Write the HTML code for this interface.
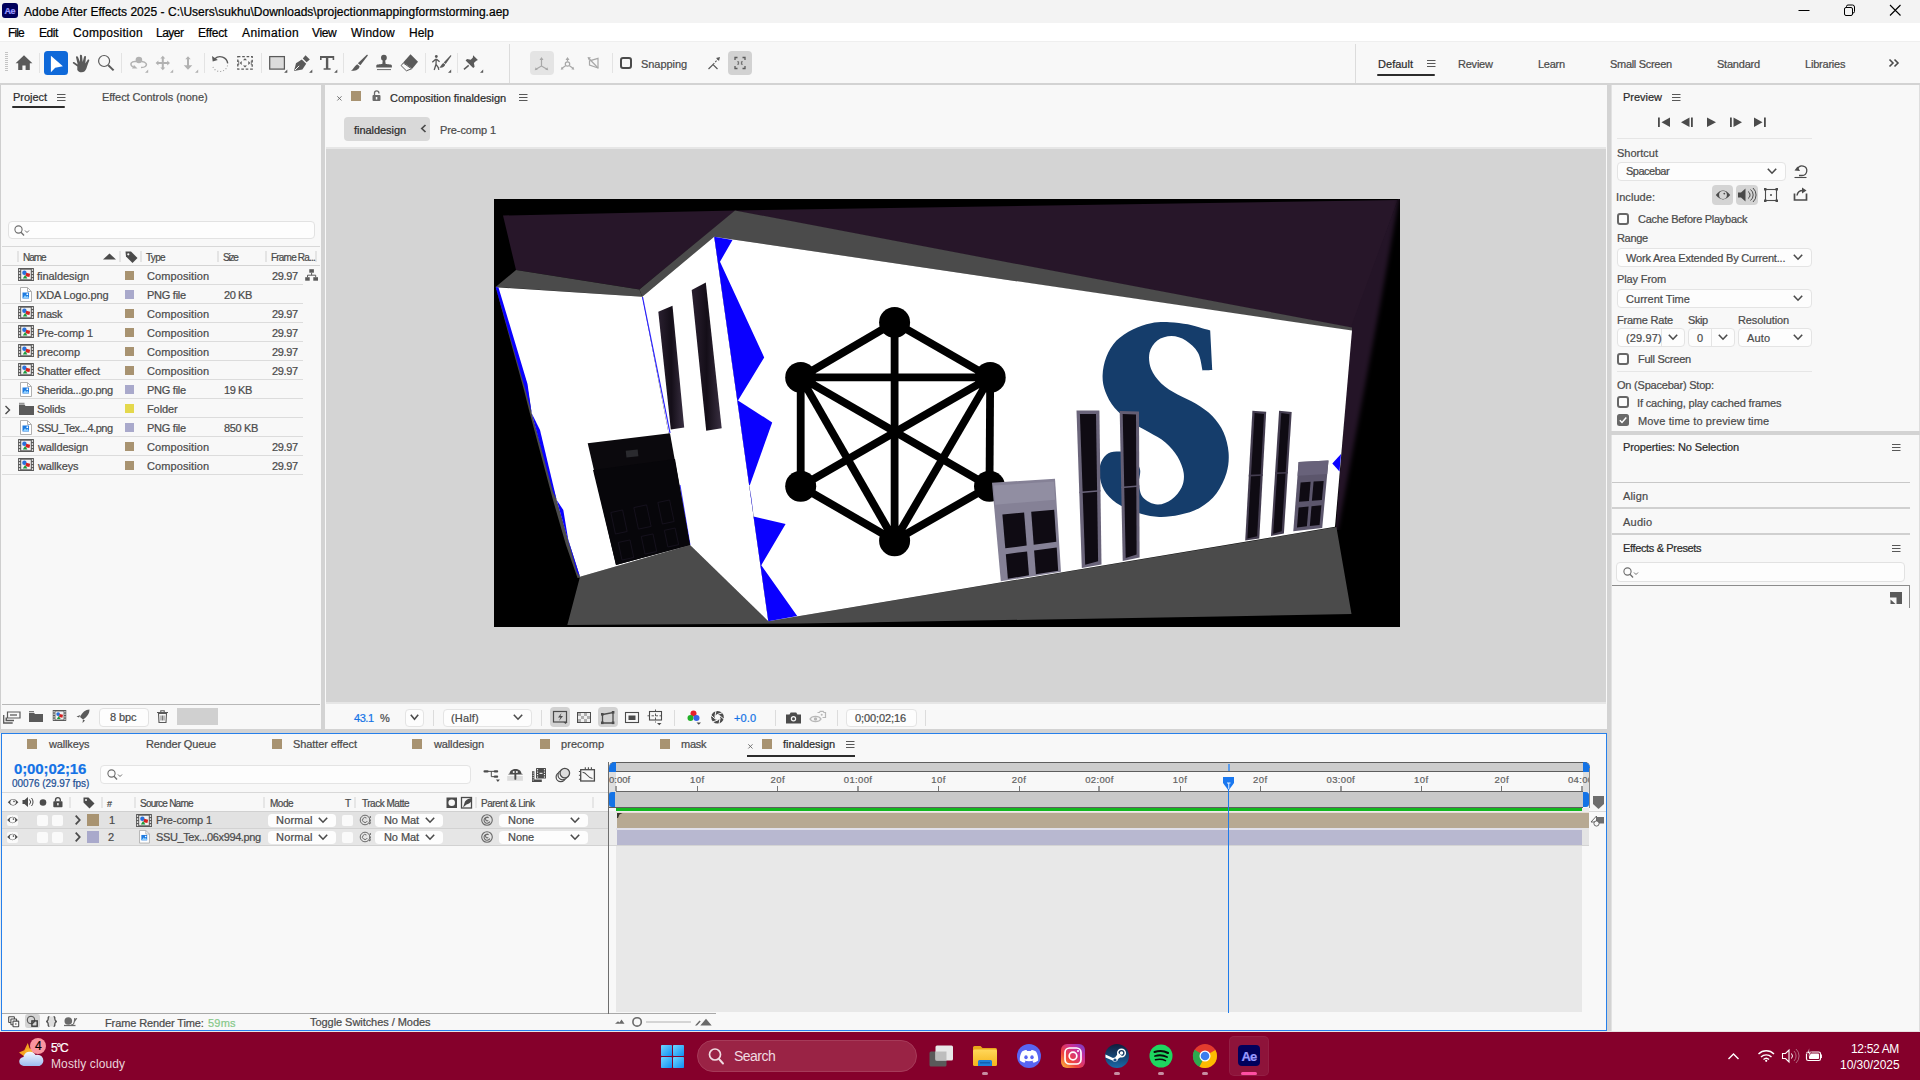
<!DOCTYPE html>
<html><head><meta charset="utf-8"><title>Adobe After Effects 2025</title>
<style>
html,body{margin:0;padding:0}
body{width:1920px;height:1080px;overflow:hidden;position:relative;background:#f8f8f8;font-family:"Liberation Sans",sans-serif;}
.a{position:absolute;display:block}
.t{position:absolute;white-space:pre;line-height:1;display:block;-webkit-text-stroke:0.22px currentColor}
svg{overflow:visible}
</style></head><body>

<!-- layout -->
<div class="a" style="left:0px;top:0px;width:1920px;height:23px;background:#f3f3f3;"></div>
<div class="a" style="left:0px;top:23px;width:1920px;height:18px;background:#ffffff;"></div>
<div class="a" style="left:0px;top:41px;width:1920px;height:42px;background:#f8f8f8;"></div>
<div class="a" style="left:0px;top:41px;width:1920px;height:1px;background:#efefef;"></div>
<div class="a" style="left:0px;top:83px;width:1920px;height:2px;background:#d3d3d3;"></div>
<div class="a" style="left:0px;top:85px;width:321px;height:644px;background:#f8f8f8;"></div>
<div class="a" style="left:0px;top:85px;width:1px;height:644px;background:#cfcfcf;"></div>
<div class="a" style="left:321px;top:85px;width:4px;height:644px;background:#d3d3d3;"></div>
<div class="a" style="left:325px;top:85px;width:1282px;height:644px;background:#f8f8f8;"></div>
<div class="a" style="left:326px;top:147px;width:1280px;height:2px;background:#e6e6e6;"></div>
<div class="a" style="left:326px;top:149px;width:1280px;height:553px;background:#d4d4d4;"></div>
<div class="a" style="left:326px;top:702px;width:1280px;height:2px;background:#e6e6e6;"></div>
<div class="a" style="left:1607px;top:85px;width:4px;height:948px;background:#d3d3d3;"></div>
<div class="a" style="left:1611px;top:85px;width:309px;height:947px;background:#f8f8f8;"></div>
<div class="a" style="left:1611px;top:85px;width:1px;height:947px;background:#e2e2e2;"></div>
<div class="a" style="left:1919px;top:85px;width:1px;height:947px;background:#dedede;"></div>
<div class="a" style="left:0px;top:729px;width:1611px;height:4px;background:#d3d3d3;"></div>
<div class="a" style="left:0px;top:733px;width:1px;height:298px;background:#ececec;"></div>
<div class="a" style="left:1px;top:733px;width:1606px;height:298px;background:#f8f8f8;box-sizing:border-box;border:1px solid #2680eb"></div>
<div class="a" style="left:0px;top:1031px;width:1920px;height:1px;background:#e9e3e3;"></div>
<div class="a" style="left:0px;top:1032px;width:1920px;height:48px;background:#85002b;"></div>
<!-- comp_art -->
<svg class="a" style="left:0;top:0" width="1920" height="1080" viewBox="0 0 1920 1080"><defs><clipPath id="cimg"><rect x="494" y="199" width="906" height="428"/></clipPath><linearGradient id="rw" x1="0" y1="0" x2="1" y2="0"><stop offset="0" stop-color="#21121f"/><stop offset="0.7" stop-color="#080408"/><stop offset="1" stop-color="#000"/></linearGradient><linearGradient id="wn" x1="0" y1="0" x2="1" y2="0"><stop offset="0" stop-color="#2a2030"/><stop offset="0.5" stop-color="#140e18"/><stop offset="1" stop-color="#3a3042"/></linearGradient><filter id="bl" x="-20%" y="-5%" width="140%" height="110%"><feGaussianBlur stdDeviation="2.2"/></filter></defs><g clip-path="url(#cimg)"><rect x="494" y="199" width="906" height="428" fill="#000"/><polygon points="503.0,215.5 735.0,210.5 1398.0,200.0 1352.0,328.0 735.0,211.0 639.4,289.4 516.0,270.0" fill="#271629" /><polygon points="1351.0,327.0 1398.0,199.0 1402.0,199.0 1402.0,530.0 1335.0,530.0 1336.0,526.0" fill="#241427" /><polygon points="1400.5,190 1412,190 1412,545 1334,545 1339.5,521 1381,300" fill="#000" filter="url(#bl)"/><polygon points="516.0,270.0 639.4,289.4 642.3,296.7 495.6,287.0" fill="#4b4b4b" /><polygon points="639.4,289.4 735.0,210.5 1352.0,327.5 1352.0,331.0 714.2,236.7 642.3,296.7" fill="#4b4b4b" /><polygon points="495.6,287.0 524.0,390.0 529.0,410.0 553.0,500.0 566.0,545.0 577.5,578.0 581.0,577.5 560.0,505.0 532.0,413.0 527.0,384.0" fill="#4b4b4b" /><polygon points="580.0,576.7 690.0,545.0 768.3,621.2 1336.4,527.0 1351.5,614.0 1220.0,616.5 800.0,623.5 567.3,625.0" fill="#4b4b4b" /><polygon points="496.0,287.3 642.3,296.7 690.0,545.0 580.0,576.7 568.3,540.0 556.7,500.0 531.7,413.3 526.7,383.3" fill="#fff" /><polygon points="642.3,296.7 714.2,236.7 768.3,621.2 690.0,545.0" fill="#fff" /><polygon points="714.2,236.7 1352.0,330.5 1335.0,526.8 768.3,621.2" fill="#fff" /><polygon points="495.6,287.0 498.5,287.5 527.5,384.0 531.7,413.3 526.0,392.0" fill="#0a00ff" /><polygon points="531.7,413.3 540.0,430.0 556.7,500.0 553.0,492.0" fill="#0a00ff" /><polygon points="556.7,500.0 563.3,510.0 568.3,540.0 580.0,576.7 577.0,572.0" fill="#0a00ff" /><line x1="642.5" y1="297" x2="670" y2="433" stroke="#2a20ff" stroke-width="1.2"/><line x1="680" y1="485" x2="690" y2="545" stroke="#3a30ff" stroke-width="1"/><polygon points="714.2,236.7 732.5,240.0 720.0,261.7 764.2,357.5 738.0,400.4 737.2,400.0" fill="#0a00ff" /><polygon points="737.2,400.0 738.0,400.4 772.2,422.4 749.8,485.3 749.1,485.0" fill="#0a00ff" /><polygon points="749.1,485.0 751.4,498.0 753.7,516.6 752.5,509.0" fill="#0a00ff" /><polygon points="753.5,516.6 785.6,524.0 761.3,565.2 797.2,616.0 768.3,621.2" fill="#0a00ff" /><polygon points="1332.3,463.6 1341.0,454.0 1339.5,471.4" fill="#0a00ff" /><polygon points="658.3,311.7 672.5,305.8 684.2,427.5 670.8,429.6" fill="url(#wn)" /><polygon points="691.7,290.0 705.8,282.5 721.7,428.3 706.2,430.8" fill="url(#wn)" /><polygon points="587.7,443.3 670.0,433.3 690.0,545.0 616.0,565.0" fill="#0b090d" /><polygon points="593.0,470.0 675.0,459.0 690.0,545.0 616.0,565.0" fill="#07060a" /><rect x="626" y="450" width="12" height="7" fill="#2a2a2e" transform="rotate(-6 632 453)"/><rect x="613" y="511" width="12" height="22" fill="none" stroke="#17121f" stroke-width="0.8" transform="rotate(-12 619.0 522.0)"/><rect x="636" y="506" width="13" height="22" fill="none" stroke="#17121f" stroke-width="0.8" transform="rotate(-12 642.5 517.0)"/><rect x="660" y="501" width="12" height="22" fill="none" stroke="#17121f" stroke-width="0.8" transform="rotate(-12 666.0 512.0)"/><rect x="620" y="541" width="12" height="18" fill="none" stroke="#17121f" stroke-width="0.8" transform="rotate(-12 626.0 550.0)"/><rect x="643" y="535" width="12" height="18" fill="none" stroke="#17121f" stroke-width="0.8" transform="rotate(-12 649.0 544.0)"/><rect x="666" y="529" width="11" height="17" fill="none" stroke="#17121f" stroke-width="0.8" transform="rotate(-12 671.5 537.5)"/><line x1="894.6" y1="322.4" x2="800.7" y2="377.4" stroke="#000" stroke-width="7.8"/><line x1="894.6" y1="322.4" x2="990.2" y2="377.4" stroke="#000" stroke-width="7.8"/><line x1="894.6" y1="322.4" x2="894.6" y2="540.7" stroke="#000" stroke-width="7.8"/><line x1="800.7" y1="377.4" x2="990.2" y2="377.4" stroke="#000" stroke-width="7.8"/><line x1="800.7" y1="377.4" x2="800.7" y2="486.3" stroke="#000" stroke-width="7.8"/><line x1="990.2" y1="377.4" x2="989.5" y2="486.3" stroke="#000" stroke-width="7.8"/><line x1="800.7" y1="377.4" x2="989.5" y2="486.3" stroke="#000" stroke-width="7.8"/><line x1="990.2" y1="377.4" x2="800.7" y2="486.3" stroke="#000" stroke-width="7.8"/><line x1="800.7" y1="377.4" x2="894.6" y2="540.7" stroke="#000" stroke-width="7.8"/><line x1="990.2" y1="377.4" x2="894.6" y2="540.7" stroke="#000" stroke-width="7.8"/><line x1="800.7" y1="486.3" x2="894.6" y2="540.7" stroke="#000" stroke-width="7.8"/><line x1="989.5" y1="486.3" x2="894.6" y2="540.7" stroke="#000" stroke-width="7.8"/><circle cx="894.6" cy="322.4" r="15.5" fill="#000"/><circle cx="800.7" cy="377.4" r="15.5" fill="#000"/><circle cx="990.2" cy="377.4" r="15.5" fill="#000"/><circle cx="800.7" cy="486.3" r="15.5" fill="#000"/><circle cx="989.5" cy="486.3" r="15.5" fill="#000"/><circle cx="894.6" cy="540.7" r="15.5" fill="#000"/><path d="M1210.2,330.4C1210.5,337.0 1212.0,363.5 1212.3,370.1C1210.7,370.2 1204.1,370.4 1202.5,370.5C1201.8,367.6 1200.8,357.8 1198.0,352.8C1195.2,347.8 1190.2,343.4 1185.8,340.6C1181.4,337.8 1176.2,336.1 1171.5,336.1C1166.8,336.1 1161.0,337.8 1157.3,340.6C1153.6,343.4 1150.5,348.1 1149.5,352.8C1148.5,357.6 1149.1,364.0 1151.1,369.1C1153.1,374.2 1156.9,379.1 1161.3,383.4C1165.7,387.6 1171.8,391.2 1177.6,394.6C1183.4,398.0 1190.2,400.1 1196.0,403.7C1201.8,407.3 1207.7,411.2 1212.3,416.0C1216.9,420.8 1220.8,426.2 1223.5,432.3C1226.2,438.4 1228.1,445.9 1228.6,452.7C1229.1,459.5 1228.5,466.2 1226.5,473.0C1224.5,479.8 1220.8,487.6 1216.4,493.4C1212.0,499.2 1206.1,504.1 1200.0,507.7C1193.9,511.3 1186.5,513.3 1179.7,514.8C1172.9,516.3 1165.8,517.1 1159.3,516.9C1152.8,516.7 1147.5,515.7 1141.0,513.8C1134.5,511.9 1126.4,509.0 1120.6,505.6C1114.8,502.2 1109.7,497.8 1106.3,493.4C1102.9,489.0 1101.2,483.9 1100.2,479.2C1099.2,474.4 1099.2,469.0 1100.2,464.9C1101.2,460.8 1103.6,456.9 1106.3,454.7C1109.0,452.5 1112.4,451.6 1116.5,451.6C1120.6,451.6 1126.9,451.8 1130.8,454.7C1134.7,457.6 1138.6,464.2 1139.9,469.0C1141.2,473.8 1138.4,478.4 1138.9,483.2C1139.4,487.9 1139.9,493.9 1143.0,497.5C1146.1,501.1 1152.5,504.3 1157.3,504.6C1162.0,504.9 1167.4,502.4 1171.5,499.5C1175.6,496.6 1179.7,491.7 1181.7,487.3C1183.7,482.9 1184.4,478.1 1183.7,473.0C1183.0,467.9 1180.6,461.8 1177.6,456.7C1174.5,451.6 1170.2,446.6 1165.4,442.5C1160.7,438.4 1154.9,435.7 1149.1,432.3C1143.3,428.9 1136.6,426.2 1130.8,422.1C1125.0,418.0 1118.8,412.9 1114.5,407.8C1110.2,402.7 1107.3,396.9 1105.3,391.5C1103.3,386.1 1102.4,381.0 1102.6,375.2C1102.8,369.4 1104.0,362.7 1106.3,356.9C1108.6,351.1 1112.1,345.2 1116.5,340.6C1120.9,336.0 1127.0,332.3 1132.8,329.4C1138.6,326.5 1145.0,324.4 1151.1,323.2C1157.2,322.0 1163.4,322.0 1169.5,322.2C1175.6,322.4 1182.4,323.3 1187.8,324.3C1193.2,325.3 1198.4,327.3 1202.1,328.3C1205.8,329.3 1208.8,330.0 1210.2,330.4Z" fill="#153d6b"/><polygon points="1076.5,410.6 1099.4,410.6 1101.5,564.6 1081.8,568.1" fill="#6a647a" /><polygon points="1079.9,414.0 1096.0,414.0 1098.1,561.2 1085.2,564.7" fill="#0f0b13" /><line x1="1079.3" y1="492.5" x2="1100.5" y2="490.7" stroke="#6a647a" stroke-width="1.6"/><polygon points="1119.7,410.9 1139.0,411.4 1139.6,557.6 1122.7,561.1" fill="#645e74" /><polygon points="1122.7,413.9 1136.0,414.4 1136.6,554.6 1125.7,558.1" fill="#0f0b13" /><line x1="1121.2" y1="487.5" x2="1139.3" y2="486.0" stroke="#645e74" stroke-width="1.6"/><polygon points="1252.4,410.7 1266.2,411.7 1259.3,538.4 1245.2,540.6" fill="#443d50" /><polygon points="1254.6,412.9 1264.0,413.9 1257.1,536.2 1247.4,538.4" fill="#0f0b13" /><line x1="1248.8" y1="475.6" x2="1262.8" y2="475.0" stroke="#443d50" stroke-width="1.6"/><polygon points="1279.1,410.7 1291.7,412.0 1283.9,533.4 1271.0,535.9" fill="#443d50" /><polygon points="1281.3,412.9 1289.5,414.2 1281.7,531.2 1273.2,533.7" fill="#0f0b13" /><line x1="1275.0" y1="473.3" x2="1287.8" y2="472.7" stroke="#443d50" stroke-width="1.6"/><polygon points="992.0,482.7 1055.0,478.7 1061.0,571.7 1000.8,581.3" fill="#858196" /><polygon points="993.5,485.6 1053.9,481.6 1055.1,499.7 995.2,504.8" fill="#918ea2" /><polygon points="1002.4,514.5 1024.1,512.5 1026.7,545.6 1005.3,548.3" fill="#0f0b13" /><polygon points="1005.8,554.2 1027.1,551.4 1029.0,575.3 1007.9,578.7" fill="#0f0b13" /><polygon points="1031.2,511.8 1054.2,509.7 1056.3,541.8 1033.7,544.7" fill="#0f0b13" /><polygon points="1034.1,550.4 1056.7,547.4 1058.2,570.7 1035.9,574.3" fill="#0f0b13" /><polygon points="1298.6,462.0 1328.5,460.4 1322.2,528.0 1293.3,531.2" fill="#5c566c" /><polygon points="1298.6,462.0 1328.5,460.4 1327.2,473.9 1297.5,475.8" fill="#68627a" /><polygon points="1300.6,482.5 1310.6,481.8 1309.0,501.0 1299.0,501.8" fill="#0f0b13" /><polygon points="1298.6,507.4 1308.6,506.5 1306.9,526.3 1297.0,527.4" fill="#0f0b13" /><polygon points="1313.6,481.6 1323.7,480.9 1321.9,499.9 1311.9,500.7" fill="#0f0b13" /><polygon points="1311.5,506.2 1321.4,505.3 1319.6,524.9 1309.8,526.0" fill="#0f0b13" /></g></svg>
<!-- topbars -->
<div class="a" style="left:2px;top:3px;width:16px;height:15px;background:#00005b;border-radius:3px"></div>
<span id="t0" class="t" style="left:4.50px;top:6.88px;font-size:9px;color:#9999ff;font-weight:700;letter-spacing:-0.500px;">Ae</span>
<span id="t1" class="t" style="left:24.00px;top:5.84px;font-size:12px;color:#000;font-weight:400;letter-spacing:0.028px;">Adobe After Effects 2025 - C:\Users\sukhu\Downloads\projectionmappingformstorming.aep</span>
<svg class="a" style="left:1790px;top:0px;" width="130" height="23" viewBox="0 0 130 23"><path d="M8.5,10.5H19.5" stroke="#000" stroke-width="1" fill="none"/><rect x="54.5" y="7.5" width="8" height="8" rx="1.5" fill="none" stroke="#000" stroke-width="1"/><path d="M56.5,7.5V6.5a1.5,1.5 0 0 1 1.5,-1.5H62.5a2,2 0 0 1 2,2V11.5a1.5,1.5 0 0 1 -1.5,1.5H62.5" fill="none" stroke="#000" stroke-width="1"/><path d="M100,5L110.5,15.5M110.5,5L100,15.5" stroke="#000" stroke-width="1.1" fill="none"/></svg>
<span id="t2" class="t" style="left:8.00px;top:26.84px;font-size:12px;color:#000;font-weight:400;letter-spacing:-0.887px;">File</span>
<span id="t3" class="t" style="left:39.00px;top:26.84px;font-size:12px;color:#000;font-weight:400;letter-spacing:-0.448px;">Edit</span>
<span id="t4" class="t" style="left:73.00px;top:26.84px;font-size:12px;color:#000;font-weight:400;letter-spacing:0.298px;">Composition</span>
<span id="t5" class="t" style="left:156.00px;top:26.84px;font-size:12px;color:#000;font-weight:400;letter-spacing:-0.505px;">Layer</span>
<span id="t6" class="t" style="left:198.00px;top:26.84px;font-size:12px;color:#000;font-weight:400;letter-spacing:-0.226px;">Effect</span>
<span id="t7" class="t" style="left:242.00px;top:26.84px;font-size:12px;color:#000;font-weight:400;letter-spacing:0.414px;">Animation</span>
<span id="t8" class="t" style="left:312.00px;top:26.84px;font-size:12px;color:#000;font-weight:400;letter-spacing:-0.376px;">View</span>
<span id="t9" class="t" style="left:351.00px;top:26.84px;font-size:12px;color:#000;font-weight:400;letter-spacing:0.197px;">Window</span>
<span id="t10" class="t" style="left:409.00px;top:26.84px;font-size:12px;color:#000;font-weight:400;letter-spacing:-0.002px;">Help</span>
<svg class="a" style="left:5px;top:52px;" width="3" height="22" viewBox="0 0 3 22"><rect x="0" y="0" width="3" height="1" fill="#c4c4c4"/><rect x="0" y="2" width="3" height="1" fill="#c4c4c4"/><rect x="0" y="4" width="3" height="1" fill="#c4c4c4"/><rect x="0" y="6" width="3" height="1" fill="#c4c4c4"/><rect x="0" y="8" width="3" height="1" fill="#c4c4c4"/><rect x="0" y="10" width="3" height="1" fill="#c4c4c4"/><rect x="0" y="12" width="3" height="1" fill="#c4c4c4"/><rect x="0" y="14" width="3" height="1" fill="#c4c4c4"/><rect x="0" y="16" width="3" height="1" fill="#c4c4c4"/><rect x="0" y="18" width="3" height="1" fill="#c4c4c4"/></svg>
<div class="a" style="left:39px;top:53px;width:1px;height:20px;background:#e3e3e3;"></div>
<div class="a" style="left:121px;top:53px;width:1px;height:20px;background:#e3e3e3;"></div>
<div class="a" style="left:204px;top:53px;width:1px;height:20px;background:#e3e3e3;"></div>
<div class="a" style="left:261px;top:53px;width:1px;height:20px;background:#e3e3e3;"></div>
<div class="a" style="left:343px;top:53px;width:1px;height:20px;background:#e3e3e3;"></div>
<div class="a" style="left:425px;top:53px;width:1px;height:20px;background:#e3e3e3;"></div>
<div class="a" style="left:457px;top:53px;width:1px;height:20px;background:#e3e3e3;"></div>
<div class="a" style="left:509px;top:44px;width:1px;height:39px;background:#dcdcdc;"></div>
<div class="a" style="left:612px;top:53px;width:1px;height:20px;background:#e3e3e3;"></div>
<div class="a" style="left:1355px;top:44px;width:1px;height:39px;background:#dcdcdc;"></div>
<div class="a" style="left:44px;top:51px;width:24px;height:24px;background:#0f69d9;border-radius:3.5px"></div>
<div class="a" style="left:530px;top:51px;width:24px;height:24px;background:#e4e4e4;border-radius:4px"></div>
<div class="a" style="left:728px;top:51px;width:24px;height:24px;background:#d2d2d2;border-radius:4px"></div>
<svg class="a" style="left:0;top:0" width="800" height="90" viewBox="0 0 800 90"><path d="M24,55.300L15.600,63.200H18.200V70H22.400V65.400H25.600V70H29.800V63.200H32.400Z" fill="#5a5a5a"/><path d="M50.900,55.700V72.200L55.200,67.800L62.900,66.300Z" fill="#fff"/><path d="M77.300,66.500L72.900,63.300c-.5,-.9 .6,-1.700 1.500,-1.100l3.300,2.200l-1.700,-7.100c-.2,-1.200 1.400,-1.600 1.900,-.5l2.100,5.300l-.1,-6.500c0,-1.200 1.900,-1.200 2.100,0l.7,6.300l1.400,-5.300c.4,-1.100 2,-.8 1.900,.4l-.7,6.400l2.300,-3.400c.7,-.9 2,-.2 1.600,.8c-1.200,2.900 -2,5.300 -2.700,7.400c-.8,2.300 -2.300,4.100 -5,4.100c-2,0 -3.200,-.9 -4.200,-2.300Z" fill="#5a5a5a"/><circle cx="104.100" cy="61" r="5.500" fill="none" stroke="#5a5a5a" stroke-width="1.200"/><path d="M108.300,65.300L113.600,70.400" stroke="#5a5a5a" stroke-width="2"/><circle cx="138.900" cy="60" r="3.300" fill="#b2b2b2"/><path d="M136,61.500c-4.500,-.5 -7,2.500 -3.200,5.500M141.800,61.500c4,.5 6,3 3.500,5c-1,.8 -2.500,1 -4.300,1" fill="none" stroke="#b2b2b2" stroke-width="1.400"/><path d="M132,68.500h5.500l-3.500,-3.500z" fill="#b2b2b2"/><path d="M148.2,69.6V72.8H145.0Z" fill="#b2b2b2"/><path d="M162.800,58v10M157.500,63h10.600" stroke="#b2b2b2" stroke-width="2"/><path d="M162.800,55.800l2.500,2.800h-5zM162.800,70.200l2.500,-2.800h-5zM155.600,63l2.800,-2.500v5zM170,63l-2.800,-2.500v5z" fill="#b2b2b2"/><path d="M173.2,69.6V72.8H170.0Z" fill="#b2b2b2"/><path d="M188,58.500v8" stroke="#b2b2b2" stroke-width="2"/><path d="M188,56.200l2.700,3h-5.400zM188,69.800l4.300,-4.600h-8.600z" fill="#b2b2b2"/><path d="M198.2,69.6V72.8H195.0Z" fill="#b2b2b2"/><path d="M214.800,58.800a7.700,7.700 0 0 1 12.900,4.600" fill="none" stroke="#5a5a5a" stroke-width="1.400"/><path d="M212,56l5.800,4l-5.100,1.500z" fill="#5a5a5a"/><path d="M227.500,65.500a7.700,7.700 0 0 1 -14.500,1.500" fill="none" stroke="#9a9a9a" stroke-width="1.100" stroke-dasharray="1 2"/><rect x="237.800" y="56.600" width="14.400" height="12.500" fill="none" stroke="#5a5a5a" stroke-width="1.300" stroke-dasharray="2.600 1.800"/><path d="M245,58.200l2,2h-4zM245,67.600l2,-2h-4zM239.700,62.900l2,-2v4zM250.300,62.900l-2,-2v4z" fill="#5a5a5a"/><path d="M238.700,60.700v4.400M251.300,60.700v4.400" stroke="#5a5a5a" stroke-width="0.800"/><rect x="269.700" y="56.600" width="14.700" height="12.500" fill="#dcdcdc" stroke="#5a5a5a" stroke-width="1.250"/><path d="M287.3,69.6V72.8H284.1Z" fill="#5a5a5a"/><path d="M294,71l2,-7.800l5.800,-3.800l4.400,4.400l-3.800,5.800z" fill="#5a5a5a"/><path d="M302.800,58.400l2.700,-3.200l4.300,4.300l-3.200,2.700z" fill="#5a5a5a"/><path d="M294.800,70.200l4.400,-4.400" stroke="#f8f8f8" stroke-width="1"/><path d="M312.3,69.6V72.8H309.1Z" fill="#5a5a5a"/><path d="M320,56h14.200v4h-1.600v-2h-4.300v10.300h2.300v1.400h-7v-1.400h2.300v-10.300h-4.300v2h-1.600z" fill="#5a5a5a"/><path d="M337.3,69.6V72.8H334.1Z" fill="#5a5a5a"/><path d="M366.800,54.800c.7,-.3 1.200,.2 .9,.9l-7.300,9.600l-2.500,-2z" fill="#5a5a5a"/><path d="M357.200,64.200l2.400,2c-.4,3 -3.600,5 -8.600,4.600c2.400,-1.400 3,-4.400 6.200,-6.600z" fill="#5a5a5a"/><circle cx="383.900" cy="57.700" r="2.900" fill="#5a5a5a"/><path d="M382.800,59.500h2.200l.7,4.600c2.500,.2 6.200,.3 6.200,1.700v1.800h-15.600v-1.800c0,-1.400 3.500,-1.500 6,-1.700z" fill="#5a5a5a"/><path d="M377,69.600h14" stroke="#5a5a5a" stroke-width="0.900"/><path d="M410.500,54.200l7.500,7.500l-5.800,7l-9,-6.200z" fill="#5a5a5a"/><path d="M403.300,63l8.300,5.800l-5.200,2.000l-5.300,-5.200z" fill="#f8f8f8" stroke="#5a5a5a" stroke-width="1"/><circle cx="436.300" cy="56.500" r="1.400" fill="#5a5a5a"/><path d="M432.300,62.200l3.200,-2.700l1.300,0l2.800,2.300M436.200,59.500l-.2,4.800l-1.800,5.700M436,64.300l2.300,3.200l.5,2.300" stroke="#5a5a5a" stroke-width="1.300" fill="none"/><path d="M450.500,55.300c.6,-.3 1,.1 .8,.7l-5.600,8l-2,-1.500z" fill="#5a5a5a"/><path d="M443.200,63l2,1.600c-.3,2.200 -2.800,3.500 -6,3c1.600,-1 2,-3 4,-4.600z" fill="#5a5a5a"/><path d="M451.2,69.6V72.8H448.0Z" fill="#5a5a5a"/><path d="M473.100,55.200l4.800,4.800l-1.900,.9l-2.100,2.100l.7,3.700l-1.400,1.400l-7.600,-7.600l1.400,-1.400l3.700,.7l2.100,-2.100z" fill="#5a5a5a"/><path d="M468.700,65.400l-4.700,3.900" stroke="#5a5a5a" stroke-width="1.500"/><path d="M483.2,69.6V72.8H480.0Z" fill="#5a5a5a"/><path d="M541.500,58.500v7.500l-5.500,3.300M541.500,66l5.500,3.300" stroke="#a8a8a8" stroke-width="1.200" fill="none"/><path d="M541.500,57l2,3h-4zM534.700,70.200l1,-3l2,2.500zM548.300,70.200l-1,-3l-2,2.500z" fill="#a8a8a8"/><path d="M567.500,58.500v3M565.600,65.700l-3.600,2.500M569.400,65.700l3.600,2.500" stroke="#a8a8a8" stroke-width="1.200" fill="none"/><circle cx="567.500" cy="64" r="2.200" fill="none" stroke="#a8a8a8" stroke-width="1.200"/><path d="M567.500,57l2,3h-4zM560.700,69.700l1,-3l2,2.500zM574.300,69.700l-1,-3l-2,2.500z" fill="#a8a8a8"/><path d="M589.500,60.800l8.500,-2.500v9.700l-8.500,-3z" stroke="#a8a8a8" stroke-width="1.200" fill="none"/><path d="M588.500,58l9.500,10" stroke="#a8a8a8" stroke-width="1.200"/><path d="M587.500,57l3.500,.5l-2.500,2.500z" fill="#a8a8a8"/><path d="M708.500,69l4.500,-4.500l4.500,4.500" fill="none" stroke="#5a5a5a" stroke-width="1.200"/><path d="M713,64.500l5,-5.500" stroke="#5a5a5a" stroke-width="1.100" stroke-dasharray="2 1.300"/><path d="M720,57l-1,4l-3,-3z" fill="#5a5a5a"/><path d="M735,60v-2.500h2.500M745,60v-2.500h-2.500M735,66v2.500h2.500M745,66v2.500h-2.500" stroke="#5a5a5a" stroke-width="1.300" fill="none"/><path d="M737.500,61.500l1.500,1M742.500,61.500l-1.500,1M737.500,64.500l1.500,-1M742.500,64.500l-1.500,-1" stroke="#5a5a5a" stroke-width="1.300"/></svg>
<div class="a" style="left:620px;top:57px;width:12px;height:12px;background:transparent;box-sizing:border-box;border:2px solid #4b4b4b;border-radius:3px"></div>
<span id="t11" class="t" style="left:641.00px;top:59.19px;font-size:11px;color:#4b4b4b;font-weight:400;letter-spacing:-0.053px;">Snapping</span>
<span id="t12" class="t" style="left:1378.00px;top:58.99px;font-size:11px;color:#2c2c2c;font-weight:400;letter-spacing:0.034px;">Default</span>
<div class="a" style="left:1377px;top:74px;width:58px;height:2px;background:#2c2c2c;border-radius:1px"></div>
<svg class="a" style="left:1427px;top:59.5px;" width="9" height="8" viewBox="0 0 9 8"><path d="M0,0.5H8.5M0,3.5H8.5M0,6.5H8.5" stroke="#585858" stroke-width="1" fill="none"/></svg>
<span id="t13" class="t" style="left:1458.00px;top:58.99px;font-size:11px;color:#4b4b4b;font-weight:400;letter-spacing:-0.225px;">Review</span>
<span id="t14" class="t" style="left:1538.00px;top:58.99px;font-size:11px;color:#4b4b4b;font-weight:400;letter-spacing:-0.254px;">Learn</span>
<span id="t15" class="t" style="left:1610.00px;top:58.99px;font-size:11px;color:#4b4b4b;font-weight:400;letter-spacing:-0.300px;">Small Screen</span>
<span id="t16" class="t" style="left:1717.00px;top:58.99px;font-size:11px;color:#4b4b4b;font-weight:400;letter-spacing:-0.218px;">Standard</span>
<span id="t17" class="t" style="left:1805.00px;top:58.99px;font-size:11px;color:#4b4b4b;font-weight:400;letter-spacing:-0.211px;">Libraries</span>
<svg class="a" style="left:1888px;top:58px;" width="12" height="10" viewBox="0 0 12 10"><path d="M1.5,1.5L5,5L1.5,8.5M6.5,1.5L10,5L6.5,8.5" fill="none" stroke="#4b4b4b" stroke-width="1.6"/></svg>
<!-- project -->
<span id="t18" class="t" style="left:13.00px;top:92.19px;font-size:11px;color:#2c2c2c;font-weight:400;letter-spacing:-0.030px;">Project</span>
<svg class="a" style="left:57px;top:93.5px;" width="9" height="8" viewBox="0 0 9 8"><path d="M0,0.5H8.5M0,3.5H8.5M0,6.5H8.5" stroke="#585858" stroke-width="1" fill="none"/></svg>
<div class="a" style="left:12px;top:106px;width:53px;height:2px;background:#2c2c2c;border-radius:1px"></div>
<span id="t19" class="t" style="left:102.00px;top:92.19px;font-size:11px;color:#4b4b4b;font-weight:400;letter-spacing:-0.054px;">Effect Controls (none)</span>
<div class="a" style="left:7.5px;top:221px;width:307.5px;height:18px;background:#fdfdfd;box-sizing:border-box;border:1px solid #e2e2e2;border-radius:4px"></div>
<svg class="a" style="left:14px;top:225px;" width="18" height="12" viewBox="0 0 18 12"><circle cx="4.500" cy="4.500" r="3.600" fill="none" stroke="#6e6e6e" stroke-width="1.100"/><path d="M7,7.300L10,10.500" stroke="#6e6e6e" stroke-width="1.300"/><path d="M11,5.500l2,2l2,-2" fill="none" stroke="#6e6e6e" stroke-width="1"/></svg>
<div class="a" style="left:2px;top:246px;width:318px;height:1px;background:#d8d8d8;"></div>
<div class="a" style="left:2px;top:265px;width:318px;height:1px;background:#d4d4d4;"></div>
<div class="a" style="left:17px;top:251px;width:2px;height:11px;background:#e4e4e4;"></div>
<div class="a" style="left:119px;top:251px;width:2px;height:11px;background:#e4e4e4;"></div>
<div class="a" style="left:140px;top:251px;width:2px;height:11px;background:#e4e4e4;"></div>
<div class="a" style="left:217px;top:251px;width:2px;height:11px;background:#e4e4e4;"></div>
<div class="a" style="left:265px;top:251px;width:2px;height:11px;background:#e4e4e4;"></div>
<div class="a" style="left:315px;top:251px;width:2px;height:11px;background:#e4e4e4;"></div>
<span id="t20" class="t" style="left:23.00px;top:253.03px;font-size:10px;color:#4b4b4b;font-weight:400;letter-spacing:-1.038px;">Name</span>
<svg class="a" style="left:103px;top:253px;" width="13" height="7" viewBox="0 0 13 7"><path d="M0,6.500L6.500,0.500L13,6.500Z" fill="#4b4b4b"/></svg>
<svg class="a" style="left:125px;top:251px;" width="13" height="13" viewBox="0 0 13 13"><path d="M0.500,0.500h5.500l6.500,6.500l-5,5l-6.500,-6.500z" fill="#4b4b4b"/><circle cx="3.300" cy="3.300" r="1.100" fill="#f8f8f8"/></svg>
<span id="t21" class="t" style="left:146.00px;top:253.03px;font-size:10px;color:#4b4b4b;font-weight:400;letter-spacing:-0.706px;">Type</span>
<span id="t22" class="t" style="left:223.00px;top:253.03px;font-size:10px;color:#4b4b4b;font-weight:400;letter-spacing:-1.200px;">Size</span>
<span id="t23" class="t" style="left:271.00px;top:253.03px;font-size:10px;color:#4b4b4b;font-weight:400;letter-spacing:-0.801px;">Frame Ra...</span>
<div class="a" style="left:2px;top:284px;width:301px;height:1px;background:#dcdcdc;"></div>
<svg class="a" style="left:18px;top:268.3px;" width="16" height="13" viewBox="0 0 16 13"><rect x="0" y="0" width="16" height="13" rx="0.500" fill="#5a5a5a"/><rect x="3.200" y="1.700" width="9.600" height="9.600" fill="#f2f2f2"/><rect x="0.900" y="1.2" width="1.300" height="1.700" fill="#ececec"/><rect x="13.800" y="1.2" width="1.300" height="1.700" fill="#ececec"/><rect x="0.900" y="4.2" width="1.300" height="1.700" fill="#ececec"/><rect x="13.800" y="4.2" width="1.300" height="1.700" fill="#ececec"/><rect x="0.900" y="7.2" width="1.300" height="1.700" fill="#ececec"/><rect x="13.800" y="7.2" width="1.300" height="1.700" fill="#ececec"/><rect x="0.900" y="10.2" width="1.300" height="1.700" fill="#ececec"/><rect x="13.800" y="10.2" width="1.300" height="1.700" fill="#ececec"/><circle cx="6.400" cy="4.800" r="2.200" fill="#2a6fdb"/><rect x="7.800" y="5.200" width="4" height="3.500" fill="#d62020" transform="rotate(12 9.800 7)"/><path d="M4.800,10.600l2.300,-3.600l2.300,3.600z" fill="#1c9a3c"/></svg>
<span id="t24" class="t" style="left:37.00px;top:270.69px;font-size:11px;color:#4b4b4b;font-weight:400;letter-spacing:-0.048px;">finaldesign</span>
<div class="a" style="left:125px;top:271px;width:9px;height:9px;background:#a89371;"></div>
<span id="t25" class="t" style="left:147.00px;top:270.69px;font-size:11px;color:#4b4b4b;font-weight:400;letter-spacing:0.098px;">Composition</span>
<span id="t26" class="t" style="left:272.00px;top:270.69px;font-size:11px;color:#4b4b4b;font-weight:400;letter-spacing:-0.352px;">29.97</span>
<div class="a" style="left:2px;top:303px;width:301px;height:1px;background:#dcdcdc;"></div>
<svg class="a" style="left:20px;top:287px;" width="12" height="15" viewBox="0 0 12 15"><path d="M0.500,0.500H7.500L11.500,4.500V14.500H0.500Z" fill="#fff" stroke="#b0b0b0" stroke-width="1"/><path d="M7.500,0.500V4.500H11.500" fill="none" stroke="#b0b0b0" stroke-width="1"/><rect x="2.500" y="5.500" width="6.500" height="6" fill="#1e7be0"/><path d="M3,11l2,-2.800l1.500,1.500l1,-1l1.500,2.300z" fill="#8fd0ff"/><circle cx="7.300" cy="7.200" r="0.900" fill="#fff"/></svg>
<span id="t27" class="t" style="left:36.00px;top:289.69px;font-size:11px;color:#4b4b4b;font-weight:400;letter-spacing:-0.124px;">IXDA Logo.png</span>
<div class="a" style="left:125px;top:290px;width:9px;height:9px;background:#a9a9cb;"></div>
<span id="t28" class="t" style="left:147.00px;top:289.69px;font-size:11px;color:#4b4b4b;font-weight:400;letter-spacing:-0.262px;">PNG file</span>
<span id="t29" class="t" style="left:224.00px;top:289.69px;font-size:11px;color:#4b4b4b;font-weight:400;letter-spacing:-0.407px;">20 KB</span>
<div class="a" style="left:2px;top:322px;width:301px;height:1px;background:#dcdcdc;"></div>
<svg class="a" style="left:18px;top:306.3px;" width="16" height="13" viewBox="0 0 16 13"><rect x="0" y="0" width="16" height="13" rx="0.500" fill="#5a5a5a"/><rect x="3.200" y="1.700" width="9.600" height="9.600" fill="#f2f2f2"/><rect x="0.900" y="1.2" width="1.300" height="1.700" fill="#ececec"/><rect x="13.800" y="1.2" width="1.300" height="1.700" fill="#ececec"/><rect x="0.900" y="4.2" width="1.300" height="1.700" fill="#ececec"/><rect x="13.800" y="4.2" width="1.300" height="1.700" fill="#ececec"/><rect x="0.900" y="7.2" width="1.300" height="1.700" fill="#ececec"/><rect x="13.800" y="7.2" width="1.300" height="1.700" fill="#ececec"/><rect x="0.900" y="10.2" width="1.300" height="1.700" fill="#ececec"/><rect x="13.800" y="10.2" width="1.300" height="1.700" fill="#ececec"/><circle cx="6.400" cy="4.800" r="2.200" fill="#2a6fdb"/><rect x="7.800" y="5.200" width="4" height="3.500" fill="#d62020" transform="rotate(12 9.800 7)"/><path d="M4.800,10.600l2.300,-3.600l2.300,3.600z" fill="#1c9a3c"/></svg>
<span id="t30" class="t" style="left:37.00px;top:308.69px;font-size:11px;color:#4b4b4b;font-weight:400;letter-spacing:-0.260px;">mask</span>
<div class="a" style="left:125px;top:309px;width:9px;height:9px;background:#a89371;"></div>
<span id="t31" class="t" style="left:147.00px;top:308.69px;font-size:11px;color:#4b4b4b;font-weight:400;letter-spacing:0.098px;">Composition</span>
<span id="t32" class="t" style="left:272.00px;top:308.69px;font-size:11px;color:#4b4b4b;font-weight:400;letter-spacing:-0.352px;">29.97</span>
<div class="a" style="left:2px;top:341px;width:301px;height:1px;background:#dcdcdc;"></div>
<svg class="a" style="left:18px;top:325.3px;" width="16" height="13" viewBox="0 0 16 13"><rect x="0" y="0" width="16" height="13" rx="0.500" fill="#5a5a5a"/><rect x="3.200" y="1.700" width="9.600" height="9.600" fill="#f2f2f2"/><rect x="0.900" y="1.2" width="1.300" height="1.700" fill="#ececec"/><rect x="13.800" y="1.2" width="1.300" height="1.700" fill="#ececec"/><rect x="0.900" y="4.2" width="1.300" height="1.700" fill="#ececec"/><rect x="13.800" y="4.2" width="1.300" height="1.700" fill="#ececec"/><rect x="0.900" y="7.2" width="1.300" height="1.700" fill="#ececec"/><rect x="13.800" y="7.2" width="1.300" height="1.700" fill="#ececec"/><rect x="0.900" y="10.2" width="1.300" height="1.700" fill="#ececec"/><rect x="13.800" y="10.2" width="1.300" height="1.700" fill="#ececec"/><circle cx="6.400" cy="4.800" r="2.200" fill="#2a6fdb"/><rect x="7.800" y="5.200" width="4" height="3.500" fill="#d62020" transform="rotate(12 9.800 7)"/><path d="M4.800,10.600l2.300,-3.600l2.300,3.600z" fill="#1c9a3c"/></svg>
<span id="t33" class="t" style="left:37.00px;top:327.69px;font-size:11px;color:#4b4b4b;font-weight:400;letter-spacing:-0.082px;">Pre-comp 1</span>
<div class="a" style="left:125px;top:328px;width:9px;height:9px;background:#a89371;"></div>
<span id="t34" class="t" style="left:147.00px;top:327.69px;font-size:11px;color:#4b4b4b;font-weight:400;letter-spacing:0.098px;">Composition</span>
<span id="t35" class="t" style="left:272.00px;top:327.69px;font-size:11px;color:#4b4b4b;font-weight:400;letter-spacing:-0.352px;">29.97</span>
<div class="a" style="left:2px;top:360px;width:301px;height:1px;background:#dcdcdc;"></div>
<svg class="a" style="left:18px;top:344.3px;" width="16" height="13" viewBox="0 0 16 13"><rect x="0" y="0" width="16" height="13" rx="0.500" fill="#5a5a5a"/><rect x="3.200" y="1.700" width="9.600" height="9.600" fill="#f2f2f2"/><rect x="0.900" y="1.2" width="1.300" height="1.700" fill="#ececec"/><rect x="13.800" y="1.2" width="1.300" height="1.700" fill="#ececec"/><rect x="0.900" y="4.2" width="1.300" height="1.700" fill="#ececec"/><rect x="13.800" y="4.2" width="1.300" height="1.700" fill="#ececec"/><rect x="0.900" y="7.2" width="1.300" height="1.700" fill="#ececec"/><rect x="13.800" y="7.2" width="1.300" height="1.700" fill="#ececec"/><rect x="0.900" y="10.2" width="1.300" height="1.700" fill="#ececec"/><rect x="13.800" y="10.2" width="1.300" height="1.700" fill="#ececec"/><circle cx="6.400" cy="4.800" r="2.200" fill="#2a6fdb"/><rect x="7.800" y="5.200" width="4" height="3.500" fill="#d62020" transform="rotate(12 9.800 7)"/><path d="M4.800,10.600l2.300,-3.600l2.300,3.600z" fill="#1c9a3c"/></svg>
<span id="t36" class="t" style="left:37.00px;top:346.69px;font-size:11px;color:#4b4b4b;font-weight:400;letter-spacing:0.053px;">precomp</span>
<div class="a" style="left:125px;top:347px;width:9px;height:9px;background:#a89371;"></div>
<span id="t37" class="t" style="left:147.00px;top:346.69px;font-size:11px;color:#4b4b4b;font-weight:400;letter-spacing:0.098px;">Composition</span>
<span id="t38" class="t" style="left:272.00px;top:346.69px;font-size:11px;color:#4b4b4b;font-weight:400;letter-spacing:-0.352px;">29.97</span>
<div class="a" style="left:2px;top:379px;width:301px;height:1px;background:#dcdcdc;"></div>
<svg class="a" style="left:18px;top:363.3px;" width="16" height="13" viewBox="0 0 16 13"><rect x="0" y="0" width="16" height="13" rx="0.500" fill="#5a5a5a"/><rect x="3.200" y="1.700" width="9.600" height="9.600" fill="#f2f2f2"/><rect x="0.900" y="1.2" width="1.300" height="1.700" fill="#ececec"/><rect x="13.800" y="1.2" width="1.300" height="1.700" fill="#ececec"/><rect x="0.900" y="4.2" width="1.300" height="1.700" fill="#ececec"/><rect x="13.800" y="4.2" width="1.300" height="1.700" fill="#ececec"/><rect x="0.900" y="7.2" width="1.300" height="1.700" fill="#ececec"/><rect x="13.800" y="7.2" width="1.300" height="1.700" fill="#ececec"/><rect x="0.900" y="10.2" width="1.300" height="1.700" fill="#ececec"/><rect x="13.800" y="10.2" width="1.300" height="1.700" fill="#ececec"/><circle cx="6.400" cy="4.800" r="2.200" fill="#2a6fdb"/><rect x="7.800" y="5.200" width="4" height="3.500" fill="#d62020" transform="rotate(12 9.800 7)"/><path d="M4.800,10.600l2.300,-3.600l2.300,3.600z" fill="#1c9a3c"/></svg>
<span id="t39" class="t" style="left:37.00px;top:365.69px;font-size:11px;color:#4b4b4b;font-weight:400;letter-spacing:-0.167px;">Shatter effect</span>
<div class="a" style="left:125px;top:366px;width:9px;height:9px;background:#a89371;"></div>
<span id="t40" class="t" style="left:147.00px;top:365.69px;font-size:11px;color:#4b4b4b;font-weight:400;letter-spacing:0.098px;">Composition</span>
<span id="t41" class="t" style="left:272.00px;top:365.69px;font-size:11px;color:#4b4b4b;font-weight:400;letter-spacing:-0.352px;">29.97</span>
<div class="a" style="left:2px;top:398px;width:301px;height:1px;background:#dcdcdc;"></div>
<svg class="a" style="left:20px;top:382px;" width="12" height="15" viewBox="0 0 12 15"><path d="M0.500,0.500H7.500L11.500,4.500V14.500H0.500Z" fill="#fff" stroke="#b0b0b0" stroke-width="1"/><path d="M7.500,0.500V4.500H11.500" fill="none" stroke="#b0b0b0" stroke-width="1"/><rect x="2.500" y="5.500" width="6.500" height="6" fill="#1e7be0"/><path d="M3,11l2,-2.800l1.500,1.500l1,-1l1.500,2.300z" fill="#8fd0ff"/><circle cx="7.300" cy="7.200" r="0.900" fill="#fff"/></svg>
<span id="t42" class="t" style="left:37.00px;top:384.69px;font-size:11px;color:#4b4b4b;font-weight:400;letter-spacing:-0.307px;">Sherida...go.png</span>
<div class="a" style="left:125px;top:385px;width:9px;height:9px;background:#a9a9cb;"></div>
<span id="t43" class="t" style="left:147.00px;top:384.69px;font-size:11px;color:#4b4b4b;font-weight:400;letter-spacing:-0.262px;">PNG file</span>
<span id="t44" class="t" style="left:224.00px;top:384.69px;font-size:11px;color:#4b4b4b;font-weight:400;letter-spacing:-0.407px;">19 KB</span>
<div class="a" style="left:2px;top:417px;width:301px;height:1px;background:#dcdcdc;"></div>
<svg class="a" style="left:19px;top:403px;" width="15" height="12" viewBox="0 0 15 12"><path d="M0,1.500h5.500l1,1.500h8.500v9h-15z" fill="#5a5a5a"/><path d="M0,0.300h5.500" stroke="#5a5a5a" stroke-width="0.800"/></svg>
<svg class="a" style="left:4px;top:405px;" width="7" height="10" viewBox="0 0 7 10"><path d="M1.500,1L5.500,5L1.500,9" fill="none" stroke="#4b4b4b" stroke-width="1.400"/></svg>
<span id="t45" class="t" style="left:37.00px;top:403.69px;font-size:11px;color:#4b4b4b;font-weight:400;letter-spacing:-0.292px;">Solids</span>
<div class="a" style="left:125px;top:404px;width:9px;height:9px;background:#e4d84c;"></div>
<span id="t46" class="t" style="left:147.00px;top:403.69px;font-size:11px;color:#4b4b4b;font-weight:400;letter-spacing:-0.103px;">Folder</span>
<div class="a" style="left:2px;top:436px;width:301px;height:1px;background:#dcdcdc;"></div>
<svg class="a" style="left:20px;top:420px;" width="12" height="15" viewBox="0 0 12 15"><path d="M0.500,0.500H7.500L11.500,4.500V14.500H0.500Z" fill="#fff" stroke="#b0b0b0" stroke-width="1"/><path d="M7.500,0.500V4.500H11.500" fill="none" stroke="#b0b0b0" stroke-width="1"/><rect x="2.500" y="5.500" width="6.500" height="6" fill="#1e7be0"/><path d="M3,11l2,-2.800l1.500,1.500l1,-1l1.500,2.300z" fill="#8fd0ff"/><circle cx="7.300" cy="7.200" r="0.900" fill="#fff"/></svg>
<span id="t47" class="t" style="left:37.00px;top:422.69px;font-size:11px;color:#4b4b4b;font-weight:400;letter-spacing:-0.459px;">SSU_Tex...4.png</span>
<div class="a" style="left:125px;top:423px;width:9px;height:9px;background:#a9a9cb;"></div>
<span id="t48" class="t" style="left:147.00px;top:422.69px;font-size:11px;color:#4b4b4b;font-weight:400;letter-spacing:-0.262px;">PNG file</span>
<span id="t49" class="t" style="left:224.00px;top:422.69px;font-size:11px;color:#4b4b4b;font-weight:400;letter-spacing:-0.349px;">850 KB</span>
<div class="a" style="left:2px;top:455px;width:301px;height:1px;background:#dcdcdc;"></div>
<svg class="a" style="left:18px;top:439.3px;" width="16" height="13" viewBox="0 0 16 13"><rect x="0" y="0" width="16" height="13" rx="0.500" fill="#5a5a5a"/><rect x="3.200" y="1.700" width="9.600" height="9.600" fill="#f2f2f2"/><rect x="0.900" y="1.2" width="1.300" height="1.700" fill="#ececec"/><rect x="13.800" y="1.2" width="1.300" height="1.700" fill="#ececec"/><rect x="0.900" y="4.2" width="1.300" height="1.700" fill="#ececec"/><rect x="13.800" y="4.2" width="1.300" height="1.700" fill="#ececec"/><rect x="0.900" y="7.2" width="1.300" height="1.700" fill="#ececec"/><rect x="13.800" y="7.2" width="1.300" height="1.700" fill="#ececec"/><rect x="0.900" y="10.2" width="1.300" height="1.700" fill="#ececec"/><rect x="13.800" y="10.2" width="1.300" height="1.700" fill="#ececec"/><circle cx="6.400" cy="4.800" r="2.200" fill="#2a6fdb"/><rect x="7.800" y="5.200" width="4" height="3.500" fill="#d62020" transform="rotate(12 9.800 7)"/><path d="M4.800,10.600l2.300,-3.600l2.300,3.600z" fill="#1c9a3c"/></svg>
<span id="t50" class="t" style="left:38.00px;top:441.69px;font-size:11px;color:#4b4b4b;font-weight:400;letter-spacing:-0.138px;">walldesign</span>
<div class="a" style="left:125px;top:442px;width:9px;height:9px;background:#a89371;"></div>
<span id="t51" class="t" style="left:147.00px;top:441.69px;font-size:11px;color:#4b4b4b;font-weight:400;letter-spacing:0.098px;">Composition</span>
<span id="t52" class="t" style="left:272.00px;top:441.69px;font-size:11px;color:#4b4b4b;font-weight:400;letter-spacing:-0.352px;">29.97</span>
<div class="a" style="left:2px;top:474px;width:301px;height:1px;background:#dcdcdc;"></div>
<svg class="a" style="left:18px;top:458.3px;" width="16" height="13" viewBox="0 0 16 13"><rect x="0" y="0" width="16" height="13" rx="0.500" fill="#5a5a5a"/><rect x="3.200" y="1.700" width="9.600" height="9.600" fill="#f2f2f2"/><rect x="0.900" y="1.2" width="1.300" height="1.700" fill="#ececec"/><rect x="13.800" y="1.2" width="1.300" height="1.700" fill="#ececec"/><rect x="0.900" y="4.2" width="1.300" height="1.700" fill="#ececec"/><rect x="13.800" y="4.2" width="1.300" height="1.700" fill="#ececec"/><rect x="0.900" y="7.2" width="1.300" height="1.700" fill="#ececec"/><rect x="13.800" y="7.2" width="1.300" height="1.700" fill="#ececec"/><rect x="0.900" y="10.2" width="1.300" height="1.700" fill="#ececec"/><rect x="13.800" y="10.2" width="1.300" height="1.700" fill="#ececec"/><circle cx="6.400" cy="4.800" r="2.200" fill="#2a6fdb"/><rect x="7.800" y="5.200" width="4" height="3.500" fill="#d62020" transform="rotate(12 9.800 7)"/><path d="M4.800,10.600l2.300,-3.600l2.300,3.600z" fill="#1c9a3c"/></svg>
<span id="t53" class="t" style="left:38.00px;top:460.69px;font-size:11px;color:#4b4b4b;font-weight:400;letter-spacing:-0.152px;">wallkeys</span>
<div class="a" style="left:125px;top:461px;width:9px;height:9px;background:#a89371;"></div>
<span id="t54" class="t" style="left:147.00px;top:460.69px;font-size:11px;color:#4b4b4b;font-weight:400;letter-spacing:0.098px;">Composition</span>
<span id="t55" class="t" style="left:272.00px;top:460.69px;font-size:11px;color:#4b4b4b;font-weight:400;letter-spacing:-0.352px;">29.97</span>
<svg class="a" style="left:305px;top:269px;" width="13" height="12" viewBox="0 0 13 12"><rect x="4.300" y="0.200" width="4.600" height="3.500" fill="#5a5a5a"/><rect x="0.200" y="8.200" width="4.500" height="3.500" fill="#5a5a5a"/><rect x="8.300" y="8.200" width="4.700" height="3.500" fill="#5a5a5a"/><path d="M6.600,3.700v2.500M2.500,8.200v-2h8.200v2" fill="none" stroke="#5a5a5a" stroke-width="1"/></svg>
<div class="a" style="left:2px;top:704px;width:318px;height:1px;background:#b8b8b8;"></div>
<svg class="a" style="left:3px;top:711px;" width="18" height="13" viewBox="0 0 18 13"><path d="M4.500,1h12.500v6h-12.500z" fill="none" stroke="#5a5a5a" stroke-width="1.200"/><path d="M7,4h7" stroke="#5a5a5a" stroke-width="1.300"/><path d="M0.700,4v8h9" fill="none" stroke="#5a5a5a" stroke-width="1.300"/><path d="M2.500,6.500v3.700h8.500v-1.500h-7v-2.200z" fill="#5a5a5a"/></svg>
<svg class="a" style="left:29px;top:711px;" width="14" height="11" viewBox="0 0 14 11"><path d="M0,1.800h5l1,1.200h8v8h-14z" fill="#5a5a5a"/><path d="M0,0.500h5" stroke="#5a5a5a" stroke-width="0.800"/></svg>
<svg class="a" style="left:52px;top:710px;" width="15" height="11" viewBox="0 0 16 13"><rect x="0" y="0" width="16" height="13" rx="0.500" fill="#5a5a5a"/><rect x="3.200" y="1.700" width="9.600" height="9.600" fill="#f2f2f2"/><rect x="0.900" y="1.2" width="1.300" height="1.700" fill="#ececec"/><rect x="13.800" y="1.2" width="1.300" height="1.700" fill="#ececec"/><rect x="0.900" y="4.2" width="1.300" height="1.700" fill="#ececec"/><rect x="13.800" y="4.2" width="1.300" height="1.700" fill="#ececec"/><rect x="0.900" y="7.2" width="1.300" height="1.700" fill="#ececec"/><rect x="13.800" y="7.2" width="1.300" height="1.700" fill="#ececec"/><rect x="0.900" y="10.2" width="1.300" height="1.700" fill="#ececec"/><rect x="13.800" y="10.2" width="1.300" height="1.700" fill="#ececec"/><circle cx="6.400" cy="4.800" r="2.200" fill="#2a6fdb"/><rect x="7.800" y="5.200" width="4" height="3.500" fill="#d62020" transform="rotate(12 9.800 7)"/><path d="M4.800,10.600l2.300,-3.600l2.300,3.600z" fill="#1c9a3c"/></svg>
<svg class="a" style="left:76px;top:709px;" width="14" height="14" viewBox="0 0 14 14"><path d="M13.500,0.500c-4,0 -7.500,3 -9.500,7.500l3,2.500c4,-2.500 6.500,-6 6.500,-10z" fill="#5a5a5a"/><path d="M4.500,6l-4,1.500l2.500,1zM7,10.500l-.5,3.500l2.500,-2.500z" fill="#5a5a5a"/></svg>
<div class="a" style="left:98.5px;top:708px;width:50px;height:18.5px;background:#fdfdfd;box-sizing:border-box;border:1px solid #e2e2e2;border-radius:4px"></div>
<span id="t56" class="t" style="left:110.00px;top:711.69px;font-size:11px;color:#4b4b4b;font-weight:400;letter-spacing:-0.102px;">8 bpc</span>
<svg class="a" style="left:157px;top:710px;" width="11" height="13" viewBox="0 0 11 13"><path d="M0,2.500h11M3.800,2.300v-1.500h3.400v1.500" fill="none" stroke="#5a5a5a" stroke-width="1.100"/><path d="M1.500,3.500h8l-.5,9h-7z" fill="none" stroke="#5a5a5a" stroke-width="1.100"/><path d="M4,5.500v5M5.500,5.500v5M7,5.500v5" stroke="#5a5a5a" stroke-width="0.800"/></svg>
<div class="a" style="left:177px;top:708px;width:41px;height:17px;background:#d0d0d0;"></div>
<!-- comp_ui -->
<svg class="a" style="left:336.5px;top:95.5px;" width="5" height="5" viewBox="0 0 5 5"><path d="M0.300,0.300L4.500,4.500M4.500,0.300L0.300,4.500" stroke="#666" stroke-width="0.900"/></svg>
<div class="a" style="left:351px;top:91px;width:10px;height:10px;background:#a89371;"></div>
<svg class="a" style="left:372px;top:90px;" width="10" height="12" viewBox="0 0 10 12"><rect x="0.500" y="5" width="8" height="6" rx="1" fill="#6a6a6a"/><path d="M2.500,5v-2a2.200,2.200 0 0 1 4.400,0v.6" fill="none" stroke="#6a6a6a" stroke-width="1.300"/><rect x="3.800" y="7" width="1.500" height="2.500" fill="#f8f8f8"/></svg>
<span id="t57" class="t" style="left:390.00px;top:92.69px;font-size:11px;color:#2c2c2c;font-weight:400;letter-spacing:-0.031px;">Composition finaldesign</span>
<svg class="a" style="left:519px;top:93.5px;" width="9" height="8" viewBox="0 0 9 8"><path d="M0,0.5H8.5M0,3.5H8.5M0,6.5H8.5" stroke="#585858" stroke-width="1" fill="none"/></svg>
<div class="a" style="left:344px;top:117px;width:86px;height:24px;background:#d9d9d9;border-radius:4px"></div>
<span id="t58" class="t" style="left:354.00px;top:125.29px;font-size:11px;color:#2c2c2c;font-weight:400;letter-spacing:-0.048px;">finaldesign</span>
<svg class="a" style="left:420px;top:124px;" width="7" height="9" viewBox="0 0 7 9"><path d="M5.500,1L1.800,4.500L5.500,8" fill="none" stroke="#4b4b4b" stroke-width="1.700"/></svg>
<span id="t59" class="t" style="left:440.00px;top:125.29px;font-size:11px;color:#4b4b4b;font-weight:400;letter-spacing:-0.082px;">Pre-comp 1</span>
<span id="t60" class="t" style="left:354.00px;top:712.69px;font-size:11px;color:#1473e6;font-weight:400;letter-spacing:-0.431px;">43.1</span>
<span id="t61" class="t" style="left:380.00px;top:712.69px;font-size:11px;color:#4b4b4b;font-weight:400;letter-spacing:0.000px;">%</span>
<div class="a" style="left:404.5px;top:708.5px;width:19px;height:18px;background:#fdfdfd;box-sizing:border-box;border:1px solid #e4e4e4;border-radius:4px"></div>
<svg class="a" style="left:409.5px;top:714px;" width="9" height="6" viewBox="0 0 9 6"><path d="M0.800,0.800L4.5,5.2L8.2,0.800" fill="none" stroke="#4b4b4b" stroke-width="1.6"/></svg>
<div class="a" style="left:433px;top:710px;width:1px;height:16px;background:#dcdcdc;"></div>
<div class="a" style="left:442.5px;top:708.5px;width:89.5px;height:18px;background:#fdfdfd;box-sizing:border-box;border:1px solid #e4e4e4;border-radius:4px"></div>
<span id="t62" class="t" style="left:451.00px;top:712.69px;font-size:11px;color:#4b4b4b;font-weight:400;letter-spacing:0.155px;">(Half)</span>
<svg class="a" style="left:513px;top:714px;" width="10" height="6" viewBox="0 0 10 6"><path d="M0.800,0.800L5.0,5.2L9.2,0.800" fill="none" stroke="#4b4b4b" stroke-width="1.6"/></svg>
<div class="a" style="left:541px;top:710px;width:1px;height:16px;background:#dcdcdc;"></div>
<div class="a" style="left:674px;top:710px;width:1px;height:16px;background:#dcdcdc;"></div>
<div class="a" style="left:775px;top:710px;width:1px;height:16px;background:#dcdcdc;"></div>
<div class="a" style="left:837px;top:710px;width:1px;height:16px;background:#dcdcdc;"></div>
<div class="a" style="left:925px;top:710px;width:1px;height:16px;background:#dcdcdc;"></div>
<div class="a" style="left:550px;top:707px;width:20px;height:20px;background:#d2d2d2;border-radius:4px"></div>
<div class="a" style="left:598px;top:707px;width:20px;height:20px;background:#d2d2d2;border-radius:4px"></div>
<svg class="a" style="left:0;top:0" width="1000" height="730" viewBox="0 0 1000 730"><rect x="553.500" y="711.500" width="13" height="10.500" fill="none" stroke="#4b4b4b" stroke-width="1.200"/><path d="M561.500,713l-3.500,4.500h2.500l-1.500,3.500l4,-5h-2.500z" fill="#4b4b4b"/><path d="M563.500,722h4l-2,2z" fill="#4b4b4b"/><rect x="577.500" y="712.500" width="13" height="10" fill="#f0f0f0" stroke="#4b4b4b" stroke-width="1"/><rect x="578" y="713" width="3" height="3" fill="#b0b0b0"/><rect x="584" y="713" width="3" height="3" fill="#b0b0b0"/><rect x="581" y="716" width="3" height="3" fill="#b0b0b0"/><rect x="587" y="716" width="3" height="3" fill="#b0b0b0"/><rect x="578" y="719" width="3" height="3" fill="#b0b0b0"/><rect x="584" y="719" width="3" height="3" fill="#b0b0b0"/><path d="M602.500,714.500l10.500,-2v10.500h-10.500z" fill="none" stroke="#4b4b4b" stroke-width="1.300"/><rect x="601" y="713" width="2.600" height="2.600" fill="#4b4b4b"/><rect x="611.800" y="711" width="2.600" height="2.600" fill="#4b4b4b"/><rect x="601" y="721.500" width="2.600" height="2.600" fill="#4b4b4b"/><rect x="611.800" y="721.500" width="2.600" height="2.600" fill="#4b4b4b"/><rect x="625.500" y="712.500" width="13" height="10" fill="none" stroke="#4b4b4b" stroke-width="1.100"/><rect x="628.500" y="715.500" width="7" height="4.500" fill="#4b4b4b"/><rect x="649.500" y="711.500" width="12" height="8.500" fill="none" stroke="#4b4b4b" stroke-width="1.100"/><path d="M655.500,709.500v13M647.500,715.800h16" stroke="#4b4b4b" stroke-width="0.900" stroke-dasharray="2.500 1.500"/><path d="M657,723h4.500l-2.200,2.200z" fill="#4b4b4b"/><circle cx="693.500" cy="713.500" r="3" fill="#e6202a"/><circle cx="690.500" cy="718" r="3" fill="#22b028"/><circle cx="696.500" cy="718" r="3" fill="#3565e8"/><path d="M696.500,722.500h4.500l-2.200,2.200z" fill="#4b4b4b"/><circle cx="717.5" cy="717.3" r="6.3" fill="#4b4b4b"/><circle cx="717.5" cy="717.3" r="2.7" fill="#f8f8f8"/><path d="M720.11,718.00L719.03,723.93M718.20,719.91L712.53,721.94M715.59,719.21L711.00,715.31M714.89,716.60L715.97,710.67M716.80,714.69L722.47,712.66M719.41,715.39L724.00,719.29" stroke="#f8f8f8" stroke-width="1" fill="none"/><path d="M786,714.500h3.500l1.200,-2h5.500l1.200,2h3.600v9h-15z" fill="#4b4b4b"/><circle cx="793.500" cy="718.700" r="2.700" fill="#f8f8f8"/><circle cx="793.500" cy="718.700" r="1.500" fill="#4b4b4b"/><path d="M810,719c2,-3.500 9,-3.500 11,0c-2,3.500 -9,3.500 -11,0z" fill="none" stroke="#b8b8b8" stroke-width="1.400"/><circle cx="815.500" cy="719" r="1.700" fill="#b8b8b8"/><path d="M817.500,712.500h2l.7,-1.200h3l.7,1.200h1.600v5h-3" fill="none" stroke="#b8b8b8" stroke-width="1.200"/><circle cx="821.700" cy="714.800" r="1" fill="#b8b8b8"/></svg>
<span id="t63" class="t" style="left:734.00px;top:712.69px;font-size:11px;color:#1473e6;font-weight:400;letter-spacing:0.134px;">+0.0</span>
<div class="a" style="left:846px;top:708.5px;width:71px;height:18px;background:#fdfdfd;box-sizing:border-box;border:1px solid #e4e4e4;border-radius:4px"></div>
<span id="t64" class="t" style="left:855.00px;top:712.69px;font-size:11px;color:#4b4b4b;font-weight:400;letter-spacing:-0.097px;">0;00;02;16</span>
<!-- right_panel -->
<span id="t65" class="t" style="left:1623.00px;top:92.19px;font-size:11px;color:#2c2c2c;font-weight:400;letter-spacing:-0.030px;">Preview</span>
<svg class="a" style="left:1672px;top:93.5px;" width="9" height="8" viewBox="0 0 9 8"><path d="M0,0.5H8.5M0,3.5H8.5M0,6.5H8.5" stroke="#585858" stroke-width="1" fill="none"/></svg>
<div class="a" style="left:1617px;top:138px;width:195px;height:1px;background:#e6e6e6;"></div>
<span id="t66" class="t" style="left:1617.00px;top:147.69px;font-size:11px;color:#4b4b4b;font-weight:400;letter-spacing:0.013px;">Shortcut</span>
<div class="a" style="left:1617px;top:161.5px;width:168.5px;height:19px;background:#fdfdfd;box-sizing:border-box;border:1px solid #e4e4e4;border-radius:4px"></div>
<span id="t67" class="t" style="left:1626.00px;top:165.69px;font-size:11px;color:#4b4b4b;font-weight:400;letter-spacing:-0.489px;">Spacebar</span>
<svg class="a" style="left:1767px;top:168px;" width="10" height="6" viewBox="0 0 10 6"><path d="M0.800,0.800L5.0,5.2L9.2,0.800" fill="none" stroke="#4b4b4b" stroke-width="1.6"/></svg>
<span id="t68" class="t" style="left:1616.00px;top:191.69px;font-size:11px;color:#4b4b4b;font-weight:400;letter-spacing:0.076px;">Include:</span>
<div class="a" style="left:1712px;top:185px;width:21px;height:20px;background:#d4d4d4;border-radius:4px"></div>
<div class="a" style="left:1736px;top:185px;width:22px;height:20px;background:#d4d4d4;border-radius:4px"></div>
<div class="a" style="left:1617px;top:212.5px;width:12px;height:12px;background:#fcfcfc;box-sizing:border-box;border:2px solid #666;border-radius:3px"></div>
<span id="t69" class="t" style="left:1638.00px;top:213.69px;font-size:11px;color:#4b4b4b;font-weight:400;letter-spacing:-0.273px;">Cache Before Playback</span>
<span id="t70" class="t" style="left:1617.00px;top:232.69px;font-size:11px;color:#4b4b4b;font-weight:400;letter-spacing:-0.324px;">Range</span>
<div class="a" style="left:1617px;top:248px;width:195px;height:19px;background:#fdfdfd;box-sizing:border-box;border:1px solid #e4e4e4;border-radius:4px"></div>
<span id="t71" class="t" style="left:1626.00px;top:252.69px;font-size:11px;color:#4b4b4b;font-weight:400;letter-spacing:-0.195px;">Work Area Extended By Current...</span>
<svg class="a" style="left:1793px;top:254px;" width="10" height="6" viewBox="0 0 10 6"><path d="M0.800,0.800L5.0,5.2L9.2,0.800" fill="none" stroke="#4b4b4b" stroke-width="1.6"/></svg>
<span id="t72" class="t" style="left:1617.00px;top:273.69px;font-size:11px;color:#4b4b4b;font-weight:400;letter-spacing:-0.119px;">Play From</span>
<div class="a" style="left:1617px;top:289px;width:195px;height:19px;background:#fdfdfd;box-sizing:border-box;border:1px solid #e4e4e4;border-radius:4px"></div>
<span id="t73" class="t" style="left:1626.00px;top:293.69px;font-size:11px;color:#4b4b4b;font-weight:400;letter-spacing:0.032px;">Current Time</span>
<svg class="a" style="left:1793px;top:295px;" width="10" height="6" viewBox="0 0 10 6"><path d="M0.800,0.800L5.0,5.2L9.2,0.800" fill="none" stroke="#4b4b4b" stroke-width="1.6"/></svg>
<span id="t74" class="t" style="left:1617.00px;top:314.99px;font-size:11px;color:#4b4b4b;font-weight:400;letter-spacing:-0.217px;">Frame Rate</span>
<span id="t75" class="t" style="left:1688.00px;top:314.99px;font-size:11px;color:#4b4b4b;font-weight:400;letter-spacing:-0.427px;">Skip</span>
<span id="t76" class="t" style="left:1738.00px;top:314.99px;font-size:11px;color:#4b4b4b;font-weight:400;letter-spacing:-0.095px;">Resolution</span>
<div class="a" style="left:1617px;top:328px;width:68px;height:19px;background:#fdfdfd;box-sizing:border-box;border:1px solid #e4e4e4;border-radius:4px"></div>
<div class="a" style="left:1661px;top:329px;width:1px;height:17px;background:#e4e4e4;"></div>
<span id="t77" class="t" style="left:1626.00px;top:332.69px;font-size:11px;color:#4b4b4b;font-weight:400;letter-spacing:0.135px;">(29.97)</span>
<svg class="a" style="left:1668px;top:334px;" width="10" height="6" viewBox="0 0 10 6"><path d="M0.800,0.800L5.0,5.2L9.2,0.800" fill="none" stroke="#4b4b4b" stroke-width="1.6"/></svg>
<div class="a" style="left:1688px;top:328px;width:47px;height:19px;background:#fdfdfd;box-sizing:border-box;border:1px solid #e4e4e4;border-radius:4px"></div>
<div class="a" style="left:1711px;top:329px;width:1px;height:17px;background:#e4e4e4;"></div>
<span id="t78" class="t" style="left:1697.00px;top:332.69px;font-size:11px;color:#4b4b4b;font-weight:400;letter-spacing:0.000px;">0</span>
<svg class="a" style="left:1718px;top:334px;" width="10" height="6" viewBox="0 0 10 6"><path d="M0.800,0.800L5.0,5.2L9.2,0.800" fill="none" stroke="#4b4b4b" stroke-width="1.6"/></svg>
<div class="a" style="left:1738px;top:328px;width:74px;height:19px;background:#fdfdfd;box-sizing:border-box;border:1px solid #e4e4e4;border-radius:4px"></div>
<span id="t79" class="t" style="left:1747.00px;top:332.69px;font-size:11px;color:#4b4b4b;font-weight:400;letter-spacing:0.163px;">Auto</span>
<svg class="a" style="left:1793px;top:334px;" width="10" height="6" viewBox="0 0 10 6"><path d="M0.800,0.800L5.0,5.2L9.2,0.800" fill="none" stroke="#4b4b4b" stroke-width="1.6"/></svg>
<div class="a" style="left:1617px;top:352.5px;width:12px;height:12px;background:#fcfcfc;box-sizing:border-box;border:2px solid #666;border-radius:3px"></div>
<span id="t80" class="t" style="left:1638.00px;top:353.69px;font-size:11px;color:#4b4b4b;font-weight:400;letter-spacing:-0.252px;">Full Screen</span>
<div class="a" style="left:1617px;top:371px;width:195px;height:1px;background:#e6e6e6;"></div>
<span id="t81" class="t" style="left:1617.00px;top:379.69px;font-size:11px;color:#4b4b4b;font-weight:400;letter-spacing:-0.213px;">On (Spacebar) Stop:</span>
<div class="a" style="left:1617px;top:396px;width:12px;height:12px;background:#fcfcfc;box-sizing:border-box;border:2px solid #666;border-radius:3px"></div>
<span id="t82" class="t" style="left:1637.00px;top:397.89px;font-size:11px;color:#4b4b4b;font-weight:400;letter-spacing:-0.141px;">If caching, play cached frames</span>
<div class="a" style="left:1617px;top:414px;width:12px;height:12px;background:#686868;border-radius:2.500px"></div><svg class="a" style="left:1617px;top:414px;" width="12" height="12" viewBox="0 0 12 12"><path d="M2.800,6.200L5,8.500L9.300,3.500" fill="none" stroke="#fff" stroke-width="1.500"/></svg>
<span id="t83" class="t" style="left:1638.00px;top:415.89px;font-size:11px;color:#4b4b4b;font-weight:400;letter-spacing:0.140px;">Move time to preview time</span>
<div class="a" style="left:1611px;top:431px;width:309px;height:4px;background:#d3d3d3;"></div>
<span id="t84" class="t" style="left:1623.00px;top:441.69px;font-size:11px;color:#2c2c2c;font-weight:400;letter-spacing:-0.109px;">Properties: No Selection</span>
<svg class="a" style="left:1892px;top:443.5px;" width="9" height="8" viewBox="0 0 9 8"><path d="M0,0.5H8.5M0,3.5H8.5M0,6.5H8.5" stroke="#585858" stroke-width="1" fill="none"/></svg>
<div class="a" style="left:1612px;top:482px;width:298px;height:1px;background:#c8c8c8;"></div>
<span id="t85" class="t" style="left:1623.00px;top:490.69px;font-size:11px;color:#4b4b4b;font-weight:400;letter-spacing:0.164px;">Align</span>
<div class="a" style="left:1612px;top:507px;width:298px;height:2px;background:#d0d0d0;"></div>
<span id="t86" class="t" style="left:1623.00px;top:516.69px;font-size:11px;color:#4b4b4b;font-weight:400;letter-spacing:0.246px;">Audio</span>
<div class="a" style="left:1612px;top:533px;width:298px;height:2px;background:#d0d0d0;"></div>
<span id="t87" class="t" style="left:1623.00px;top:542.69px;font-size:11px;color:#2c2c2c;font-weight:400;letter-spacing:-0.354px;">Effects &amp; Presets</span>
<svg class="a" style="left:1892px;top:544.5px;" width="9" height="8" viewBox="0 0 9 8"><path d="M0,0.5H8.5M0,3.5H8.5M0,6.5H8.5" stroke="#585858" stroke-width="1" fill="none"/></svg>
<div class="a" style="left:1616px;top:562px;width:289px;height:20px;background:#fdfdfd;box-sizing:border-box;border:1px solid #e2e2e2;border-radius:4px"></div>
<svg class="a" style="left:1623px;top:567px;" width="18" height="12" viewBox="0 0 18 12"><circle cx="4.500" cy="4.500" r="3.600" fill="none" stroke="#6e6e6e" stroke-width="1.100"/><path d="M7,7.300L10,10.500" stroke="#6e6e6e" stroke-width="1.300"/><path d="M11,5.500l2,2l2,-2" fill="none" stroke="#6e6e6e" stroke-width="1"/></svg>
<div class="a" style="left:1612px;top:585px;width:298px;height:1px;background:#8c8c8c;"></div>
<div class="a" style="left:1909px;top:585px;width:1px;height:23px;background:#8c8c8c;"></div>
<svg class="a" style="left:0;top:0" width="1920" height="620" viewBox="0 0 1920 620"><rect x="1658" y="117.500" width="1.800" height="9.500" fill="#4b4b4b"/><path d="M1670,117.500v9.500l-8.500,-4.750z" fill="#4b4b4b"/><path d="M1689.500,117.500v9.500l-8.500,-4.750z" fill="#4b4b4b"/><rect x="1691" y="117.500" width="1.800" height="9.500" fill="#4b4b4b"/><path d="M1707,117.500v9.500l9,-4.750z" fill="#4b4b4b"/><rect x="1730" y="117.500" width="1.800" height="9.500" fill="#4b4b4b"/><path d="M1733.500,117.500v9.500l8.500,-4.750z" fill="#4b4b4b"/><path d="M1754,117.500v9.500l8.500,-4.750z" fill="#4b4b4b"/><rect x="1764" y="117.500" width="1.800" height="9.500" fill="#4b4b4b"/><path d="M1797.500,169a4.800,4.800 0 1 1 4.500,6.500h-3" fill="none" stroke="#4b4b4b" stroke-width="1.300"/><path d="M1794.500,170.500l3,-4l2.500,4.500z" fill="#4b4b4b"/><path d="M1794.500,177.500h12" stroke="#4b4b4b" stroke-width="1.100"/><path d="M1715.800,195Q1723,186.200 1730.200,195Q1723,203.800 1715.800,195Z" fill="#4b4b4b"/><circle cx="1723" cy="195" r="3.900" fill="#d6d6d6"/><circle cx="1724.300" cy="193.600" r="0.900" fill="#4b4b4b"/><path d="M1738,192.500h3l4.500,-4v13l-4.500,-4h-3z" fill="#4b4b4b"/><path d="M1748,191.500a4,4 0 0 1 0,7M1750.500,189.500a7,7 0 0 1 0,11M1753,188a9.500,9.500 0 0 1 0,14" fill="none" stroke="#4b4b4b" stroke-width="1"/><rect x="1765.500" y="189.500" width="11" height="11" fill="none" stroke="#4b4b4b" stroke-width="1.100"/><rect x="1764" y="188" width="2.500" height="2.500" fill="#4b4b4b"/><rect x="1775.500" y="188" width="2.500" height="2.500" fill="#4b4b4b"/><rect x="1764" y="199.500" width="2.500" height="2.500" fill="#4b4b4b"/><rect x="1775.500" y="199.500" width="2.500" height="2.500" fill="#4b4b4b"/><circle cx="1771" cy="195" r="1" fill="#4b4b4b"/><path d="M1794.500,193.500v6.500h12v-6.500" fill="none" stroke="#4b4b4b" stroke-width="1.700"/><path d="M1797,195.500c.5,-3.500 3,-5 6,-5" fill="none" stroke="#4b4b4b" stroke-width="1.500"/><path d="M1802,187.500l4.500,3l-4.500,3z" fill="#4b4b4b"/><path d="M1890,592h12v12h-5.500v-6.500h-6.500z" fill="#5a5a5a"/><path d="M1890.500,599.500l5,4.500h-5z" fill="#5a5a5a"/></svg>
<!-- timeline -->
<div class="a" style="left:27px;top:739px;width:10px;height:10px;background:#a89371;"></div>
<span id="t88" class="t" style="left:49.00px;top:739.19px;font-size:11px;color:#4b4b4b;font-weight:400;letter-spacing:-0.152px;">wallkeys</span>
<div class="a" style="left:272px;top:739px;width:10px;height:10px;background:#a89371;"></div>
<span id="t89" class="t" style="left:293.00px;top:739.19px;font-size:11px;color:#4b4b4b;font-weight:400;letter-spacing:-0.090px;">Shatter effect</span>
<div class="a" style="left:412px;top:739px;width:10px;height:10px;background:#a89371;"></div>
<span id="t90" class="t" style="left:434.00px;top:739.19px;font-size:11px;color:#4b4b4b;font-weight:400;letter-spacing:-0.138px;">walldesign</span>
<div class="a" style="left:540px;top:739px;width:10px;height:10px;background:#a89371;"></div>
<span id="t91" class="t" style="left:561.00px;top:739.19px;font-size:11px;color:#4b4b4b;font-weight:400;letter-spacing:0.053px;">precomp</span>
<div class="a" style="left:660px;top:739px;width:10px;height:10px;background:#a89371;"></div>
<span id="t92" class="t" style="left:681.00px;top:739.19px;font-size:11px;color:#4b4b4b;font-weight:400;letter-spacing:-0.260px;">mask</span>
<span id="t93" class="t" style="left:146.00px;top:739.19px;font-size:11px;color:#4b4b4b;font-weight:400;letter-spacing:-0.186px;">Render Queue</span>
<svg class="a" style="left:747.5px;top:743.5px;" width="5" height="5" viewBox="0 0 5 5"><path d="M0.300,0.300L4.500,4.500M4.500,0.300L0.300,4.500" stroke="#666" stroke-width="0.900"/></svg>
<div class="a" style="left:762px;top:739px;width:10px;height:10px;background:#a89371;"></div>
<span id="t94" class="t" style="left:783.00px;top:739.19px;font-size:11px;color:#2c2c2c;font-weight:400;letter-spacing:-0.048px;">finaldesign</span>
<svg class="a" style="left:846px;top:741px;" width="9" height="8" viewBox="0 0 9 8"><path d="M0,0.5H8.5M0,3.5H8.5M0,6.5H8.5" stroke="#585858" stroke-width="1" fill="none"/></svg>
<div class="a" style="left:747px;top:755px;width:108px;height:1.5px;background:#2c2c2c;"></div>
<span id="t95" class="t" style="left:14.00px;top:760.70px;font-size:15px;color:#1473e6;font-weight:700;letter-spacing:-0.115px;">0;00;02;16</span>
<span id="t96" class="t" style="left:12.00px;top:779.03px;font-size:10px;color:#1c4f94;font-weight:400;letter-spacing:-0.066px;">00076 (29.97 fps)</span>
<div class="a" style="left:100px;top:765px;width:371px;height:19px;background:#fdfdfd;box-sizing:border-box;border:1px solid #e4e4e4;border-radius:4px"></div>
<svg class="a" style="left:107px;top:769px;" width="18" height="12" viewBox="0 0 18 12"><circle cx="4.500" cy="4.500" r="3.600" fill="none" stroke="#6e6e6e" stroke-width="1.100"/><path d="M7,7.300L10,10.500" stroke="#6e6e6e" stroke-width="1.300"/><path d="M11,5.500l2,2l2,-2" fill="none" stroke="#6e6e6e" stroke-width="1"/></svg>
<div class="a" style="left:2px;top:792px;width:607px;height:1px;background:#d8d8d8;"></div>
<div class="a" style="left:2px;top:811px;width:607px;height:1px;background:#d0d0d0;"></div>
<div class="a" style="left:69px;top:797px;width:2px;height:11px;background:#e6e6e6;"></div>
<div class="a" style="left:101px;top:797px;width:2px;height:11px;background:#e6e6e6;"></div>
<div class="a" style="left:134px;top:797px;width:2px;height:11px;background:#e6e6e6;"></div>
<div class="a" style="left:263px;top:797px;width:2px;height:11px;background:#e6e6e6;"></div>
<div class="a" style="left:354px;top:797px;width:2px;height:11px;background:#e6e6e6;"></div>
<div class="a" style="left:592px;top:797px;width:2px;height:11px;background:#e6e6e6;"></div>
<span id="t97" class="t" style="left:107.00px;top:799.58px;font-size:9px;color:#4b4b4b;font-weight:400;letter-spacing:0.000px;">#</span>
<span id="t98" class="t" style="left:140.00px;top:798.74px;font-size:10px;color:#4b4b4b;font-weight:400;letter-spacing:-0.758px;">Source Name</span>
<span id="t99" class="t" style="left:270.00px;top:798.74px;font-size:10px;color:#4b4b4b;font-weight:400;letter-spacing:-0.484px;">Mode</span>
<span id="t100" class="t" style="left:345.00px;top:798.74px;font-size:10px;color:#4b4b4b;font-weight:400;letter-spacing:0.000px;">T</span>
<span id="t101" class="t" style="left:362.00px;top:798.74px;font-size:10px;color:#4b4b4b;font-weight:400;letter-spacing:-0.486px;">Track Matte</span>
<div class="a" style="left:475px;top:797px;width:2px;height:11px;background:#e6e6e6;"></div>
<span id="t102" class="t" style="left:481.00px;top:798.74px;font-size:10px;color:#4b4b4b;font-weight:400;letter-spacing:-0.503px;">Parent &amp; Link</span>
<div class="a" style="left:2px;top:812px;width:607px;height:17px;background:#e2e2e2;"></div>
<div class="a" style="left:7px;top:814.5px;width:11px;height:11px;background:#fafafa;border-radius:2px"></div>
<div class="a" style="left:37px;top:814.5px;width:11px;height:11px;background:#fafafa;border-radius:2px"></div>
<div class="a" style="left:52px;top:814.5px;width:11px;height:11px;background:#fafafa;border-radius:2px"></div>
<div class="a" style="left:87px;top:814px;width:12px;height:12px;background:#a89371;"></div>
<span id="t103" class="t" style="left:109.00px;top:814.69px;font-size:11px;color:#4b4b4b;font-weight:400;letter-spacing:-1.200px;">1</span>
<svg class="a" style="left:136px;top:813.5px;" width="16" height="13" viewBox="0 0 16 13"><rect x="0" y="0" width="16" height="13" rx="0.500" fill="#5a5a5a"/><rect x="3.200" y="1.700" width="9.600" height="9.600" fill="#f2f2f2"/><rect x="0.900" y="1.2" width="1.300" height="1.700" fill="#ececec"/><rect x="13.800" y="1.2" width="1.300" height="1.700" fill="#ececec"/><rect x="0.900" y="4.2" width="1.300" height="1.700" fill="#ececec"/><rect x="13.800" y="4.2" width="1.300" height="1.700" fill="#ececec"/><rect x="0.900" y="7.2" width="1.300" height="1.700" fill="#ececec"/><rect x="13.800" y="7.2" width="1.300" height="1.700" fill="#ececec"/><rect x="0.900" y="10.2" width="1.300" height="1.700" fill="#ececec"/><rect x="13.800" y="10.2" width="1.300" height="1.700" fill="#ececec"/><circle cx="6.400" cy="4.800" r="2.200" fill="#2a6fdb"/><rect x="7.800" y="5.200" width="4" height="3.500" fill="#d62020" transform="rotate(12 9.800 7)"/><path d="M4.800,10.600l2.300,-3.600l2.300,3.600z" fill="#1c9a3c"/></svg>
<span id="t104" class="t" style="left:156.00px;top:814.69px;font-size:11px;color:#4b4b4b;font-weight:400;letter-spacing:-0.082px;">Pre-comp 1</span>
<div class="a" style="left:268px;top:813.5px;width:68px;height:13px;background:#fdfdfd;border-radius:4px"></div>
<span id="t105" class="t" style="left:276.00px;top:814.69px;font-size:11px;color:#4b4b4b;font-weight:400;letter-spacing:0.199px;">Normal</span>
<svg class="a" style="left:318px;top:817px;" width="10" height="6" viewBox="0 0 10 6"><path d="M0.800,0.800L5.0,5.2L9.2,0.800" fill="none" stroke="#4b4b4b" stroke-width="1.6"/></svg>
<div class="a" style="left:342px;top:814.5px;width:11px;height:11px;background:#fafafa;border-radius:2px"></div>
<div class="a" style="left:375px;top:813.5px;width:68px;height:13px;background:#fdfdfd;border-radius:4px"></div>
<span id="t106" class="t" style="left:384.00px;top:814.69px;font-size:11px;color:#4b4b4b;font-weight:400;letter-spacing:-0.080px;">No Mat</span>
<svg class="a" style="left:425px;top:817px;" width="10" height="6" viewBox="0 0 10 6"><path d="M0.800,0.800L5.0,5.2L9.2,0.800" fill="none" stroke="#4b4b4b" stroke-width="1.6"/></svg>
<div class="a" style="left:499px;top:813.5px;width:89px;height:13px;background:#fdfdfd;border-radius:4px"></div>
<span id="t107" class="t" style="left:508.00px;top:814.69px;font-size:11px;color:#4b4b4b;font-weight:400;letter-spacing:-0.060px;">None</span>
<svg class="a" style="left:570px;top:817px;" width="10" height="6" viewBox="0 0 10 6"><path d="M0.800,0.800L5.0,5.2L9.2,0.800" fill="none" stroke="#4b4b4b" stroke-width="1.6"/></svg>
<div class="a" style="left:2px;top:829px;width:607px;height:16px;background:#e6e6e6;"></div>
<div class="a" style="left:7px;top:831.5px;width:11px;height:11px;background:#fafafa;border-radius:2px"></div>
<div class="a" style="left:37px;top:831.5px;width:11px;height:11px;background:#fafafa;border-radius:2px"></div>
<div class="a" style="left:52px;top:831.5px;width:11px;height:11px;background:#fafafa;border-radius:2px"></div>
<div class="a" style="left:87px;top:831px;width:12px;height:12px;background:#a9a9cb;"></div>
<span id="t108" class="t" style="left:108.00px;top:831.69px;font-size:11px;color:#4b4b4b;font-weight:400;letter-spacing:-0.500px;">2</span>
<svg class="a" style="left:139px;top:830px;" width="11" height="13.500" viewBox="0 0 12 15"><path d="M0.500,0.500H7.500L11.500,4.500V14.500H0.500Z" fill="#fff" stroke="#b0b0b0" stroke-width="1"/><path d="M7.500,0.500V4.500H11.500" fill="none" stroke="#b0b0b0" stroke-width="1"/><rect x="2.500" y="5.500" width="6.500" height="6" fill="#1e7be0"/><path d="M3,11l2,-2.800l1.500,1.500l1,-1l1.500,2.300z" fill="#8fd0ff"/><circle cx="7.300" cy="7.200" r="0.900" fill="#fff"/></svg>
<span id="t109" class="t" style="left:156.00px;top:831.69px;font-size:11px;color:#4b4b4b;font-weight:400;letter-spacing:-0.390px;">SSU_Tex...06x994.png</span>
<div class="a" style="left:268px;top:830.5px;width:68px;height:13px;background:#fdfdfd;border-radius:4px"></div>
<span id="t110" class="t" style="left:276.00px;top:831.69px;font-size:11px;color:#4b4b4b;font-weight:400;letter-spacing:0.199px;">Normal</span>
<svg class="a" style="left:318px;top:834px;" width="10" height="6" viewBox="0 0 10 6"><path d="M0.800,0.800L5.0,5.2L9.2,0.800" fill="none" stroke="#4b4b4b" stroke-width="1.6"/></svg>
<div class="a" style="left:342px;top:831.5px;width:11px;height:11px;background:#fafafa;border-radius:2px"></div>
<div class="a" style="left:375px;top:830.5px;width:68px;height:13px;background:#fdfdfd;border-radius:4px"></div>
<span id="t111" class="t" style="left:384.00px;top:831.69px;font-size:11px;color:#4b4b4b;font-weight:400;letter-spacing:-0.080px;">No Mat</span>
<svg class="a" style="left:425px;top:834px;" width="10" height="6" viewBox="0 0 10 6"><path d="M0.800,0.800L5.0,5.2L9.2,0.800" fill="none" stroke="#4b4b4b" stroke-width="1.6"/></svg>
<div class="a" style="left:499px;top:830.5px;width:89px;height:13px;background:#fdfdfd;border-radius:4px"></div>
<span id="t112" class="t" style="left:508.00px;top:831.69px;font-size:11px;color:#4b4b4b;font-weight:400;letter-spacing:-0.060px;">None</span>
<svg class="a" style="left:570px;top:834px;" width="10" height="6" viewBox="0 0 10 6"><path d="M0.800,0.800L5.0,5.2L9.2,0.800" fill="none" stroke="#4b4b4b" stroke-width="1.6"/></svg>
<div class="a" style="left:2px;top:828px;width:607px;height:1px;background:#d2d2d2;"></div>
<div class="a" style="left:2px;top:845px;width:607px;height:1px;background:#d2d2d2;"></div>
<div class="a" style="left:2px;top:1013px;width:607px;height:1px;background:#a8a8a8;"></div>
<div class="a" style="left:25.3px;top:1014.3px;width:14.3px;height:14.1px;background:#d4d4d4;border-radius:3px"></div>
<span id="t113" class="t" style="left:105.00px;top:1017.69px;font-size:11px;color:#4b4b4b;font-weight:400;letter-spacing:-0.118px;">Frame Render Time:</span>
<span id="t114" class="t" style="left:208.00px;top:1017.69px;font-size:11px;color:#86c98a;font-weight:400;letter-spacing:0.201px;">59ms</span>
<span id="t115" class="t" style="left:310.00px;top:1017.29px;font-size:11px;color:#4b4b4b;font-weight:400;letter-spacing:-0.053px;">Toggle Switches / Modes</span>
<div class="a" style="left:608px;top:762px;width:1px;height:252px;background:#6e6e6e;"></div>
<div class="a" style="left:609px;top:762px;width:981px;height:10px;background:#cdcdcd;box-sizing:border-box;border-top:1.5px solid #5e5e5e;border-bottom:1.5px solid #5e5e5e;border-radius:5px 5px 0 0"></div>
<div class="a" style="left:609px;top:762px;width:7px;height:10px;background:#1473e6;border-radius:6px 0 0 0"></div>
<div class="a" style="left:1583px;top:762px;width:7px;height:10px;background:#1473e6;border-radius:0 6px 0 0"></div>
<div class="a" style="left:1228px;top:763.5px;width:1.6px;height:7.5px;background:#5a9bea;"></div>
<div class="a" style="left:609px;top:772px;width:7px;height:20px;background:#dedede;"></div>
<div class="a" style="left:1583px;top:772px;width:6px;height:20px;background:#dedede;"></div>
<div class="a" style="left:1589px;top:768px;width:1px;height:40px;background:#8a8a8a;"></div>
<div class="a" style="left:616px;top:790.5px;width:967px;height:1.3px;background:#666;"></div>
<div class="a" style="left:615px;top:786px;width:1.5px;height:5px;background:#999;"></div>
<div class="a" style="left:696.5px;top:786px;width:1px;height:5px;background:#777;"></div>
<div class="a" style="left:776.5px;top:786px;width:1px;height:5px;background:#777;"></div>
<div class="a" style="left:857px;top:786px;width:1.5px;height:5px;background:#999;"></div>
<div class="a" style="left:937.5px;top:786px;width:1px;height:5px;background:#777;"></div>
<div class="a" style="left:1018.5px;top:786px;width:1px;height:5px;background:#777;"></div>
<div class="a" style="left:1098px;top:786px;width:1.5px;height:5px;background:#999;"></div>
<div class="a" style="left:1179.5px;top:786px;width:1px;height:5px;background:#777;"></div>
<div class="a" style="left:1259.5px;top:786px;width:1px;height:5px;background:#777;"></div>
<div class="a" style="left:1340px;top:786px;width:1.5px;height:5px;background:#999;"></div>
<div class="a" style="left:1420.5px;top:786px;width:1px;height:5px;background:#777;"></div>
<div class="a" style="left:1500.5px;top:786px;width:1px;height:5px;background:#777;"></div>
<div class="a" style="left:1581px;top:786px;width:1.5px;height:5px;background:#999;"></div>
<div class="a" style="left:609px;top:772px;width:980px;height:18px;overflow:hidden"><div class="a" style="left:-609px;top:-772px"><span id="t116" class="t" style="left:609.00px;top:775.26px;font-size:9.5px;color:#636363;font-weight:400;letter-spacing:0.003px;">0:00f</span><span id="t117" class="t" style="left:689.95px;top:775.26px;font-size:9.5px;color:#636363;font-weight:400;letter-spacing:0.467px;">10f</span><span id="t118" class="t" style="left:770.40px;top:775.26px;font-size:9.5px;color:#636363;font-weight:400;letter-spacing:0.467px;">20f</span><span id="t119" class="t" style="left:843.85px;top:775.26px;font-size:9.5px;color:#636363;font-weight:400;letter-spacing:0.345px;">01:00f</span><span id="t120" class="t" style="left:931.30px;top:775.26px;font-size:9.5px;color:#636363;font-weight:400;letter-spacing:0.467px;">10f</span><span id="t121" class="t" style="left:1011.75px;top:775.26px;font-size:9.5px;color:#636363;font-weight:400;letter-spacing:0.467px;">20f</span><span id="t122" class="t" style="left:1085.20px;top:775.26px;font-size:9.5px;color:#636363;font-weight:400;letter-spacing:0.345px;">02:00f</span><span id="t123" class="t" style="left:1172.65px;top:775.26px;font-size:9.5px;color:#636363;font-weight:400;letter-spacing:0.467px;">10f</span><span id="t124" class="t" style="left:1253.10px;top:775.26px;font-size:9.5px;color:#636363;font-weight:400;letter-spacing:0.467px;">20f</span><span id="t125" class="t" style="left:1326.55px;top:775.26px;font-size:9.5px;color:#636363;font-weight:400;letter-spacing:0.345px;">03:00f</span><span id="t126" class="t" style="left:1414.00px;top:775.26px;font-size:9.5px;color:#636363;font-weight:400;letter-spacing:0.467px;">10f</span><span id="t127" class="t" style="left:1494.45px;top:775.26px;font-size:9.5px;color:#636363;font-weight:400;letter-spacing:0.467px;">20f</span><span id="t128" class="t" style="left:1567.90px;top:775.26px;font-size:9.5px;color:#636363;font-weight:400;letter-spacing:0.345px;">04:00f</span></div></div>
<div class="a" style="left:609px;top:792px;width:974px;height:15px;background:#c9c9c9;border-bottom:1.300px solid #5e5e5e"></div>
<div class="a" style="left:609px;top:792px;width:6px;height:15px;background:#1473e6;border-radius:3px 0 0 3px"></div>
<div class="a" style="left:1583px;top:792px;width:6px;height:15px;background:#1473e6;border-radius:0 3px 3px 0"></div>
<div class="a" style="left:616px;top:808px;width:966px;height:3px;background:#12b81e;"></div>
<div class="a" style="left:1582px;top:808px;width:7px;height:3px;background:#ececec;"></div>
<div class="a" style="left:1589px;top:811px;width:17px;height:1px;background:#d8d8d8;"></div>
<div class="a" style="left:609px;top:811px;width:980px;height:2px;background:#ebe3dd;"></div>
<div class="a" style="left:609px;top:811px;width:7px;height:34px;background:#ececec;"></div>
<div class="a" style="left:616px;top:811px;width:973px;height:35px;background:#ececec;"></div>
<div class="a" style="left:616px;top:811.5px;width:973px;height:1.5px;background:#e8ddd6;"></div>
<div class="a" style="left:617px;top:813px;width:972px;height:14.5px;background:#b7a992;border-bottom:1px solid #a3967f"></div>
<svg class="a" style="left:617px;top:813px;" width="6" height="6" viewBox="0 0 6 6"><path d="M0,0h5.500l-3,1.500l-1.500,3.500l-1,0z" fill="#3a342a"/></svg>
<div class="a" style="left:616px;top:828px;width:973px;height:2px;background:#e0e0ea;"></div>
<div class="a" style="left:617px;top:830px;width:965px;height:14.5px;background:#b8b8d0;border-bottom:1px solid #a4a4bc"></div>
<div class="a" style="left:1582px;top:828px;width:7px;height:17px;background:#e4e4e4;"></div>
<div class="a" style="left:609px;top:845px;width:980px;height:1px;background:#d4d4d4;"></div>
<div class="a" style="left:616px;top:846px;width:966px;height:166px;background:#e8e8e8;"></div>
<div class="a" style="left:609px;top:1013px;width:107px;height:1px;background:#a8a8a8;"></div>
<div class="a" style="left:1228px;top:789px;width:1.2px;height:224px;background:#1f7bea;"></div>
<svg class="a" style="left:0;top:0" width="1620" height="1032" viewBox="0 0 1620 1032"><rect x="483.500" y="770.200" width="5.100" height="2.300" rx="1.100" fill="#4b4b4b"/><rect x="493.700" y="770.200" width="4.500" height="2.300" rx="1.100" fill="#4b4b4b"/><rect x="493.700" y="775.500" width="4.500" height="2.300" rx="1.100" fill="#4b4b4b"/><path d="M488,771.350h6M491.300,771.350v5.300h3" fill="none" stroke="#4b4b4b" stroke-width="1"/><path d="M495.900,779.400h4l-2,2.500z" fill="#4b4b4b"/><rect x="507.200" y="776" width="15.700" height="4.800" fill="#dcdcdc"/><path d="M508,774.600c.5,-.9 1.200,-.9 1.500,-.9c.3,-6.400 11.700,-6.400 12,0c.3,0 1,0 1.500,.9z" fill="#4b4b4b"/><circle cx="513.700" cy="772.100" r="1" fill="#f8f8f8"/><circle cx="516.900" cy="772.100" r="1" fill="#f8f8f8"/><rect x="514.400" y="773.500" width="1.900" height="6.300" rx="0.900" fill="#4b4b4b"/><rect x="536" y="768" width="10" height="10.600" rx="0.600" fill="#4b4b4b"/><path d="M533.200,771.200v9.500h8.600" fill="none" stroke="#4b4b4b" stroke-width="2.400"/><rect x="537" y="769.10" width="1.100" height="1.200" fill="#f4f4f4"/><rect x="543.900" y="769.10" width="1.100" height="1.200" fill="#f4f4f4"/><rect x="537" y="771.55" width="1.100" height="1.200" fill="#f4f4f4"/><rect x="543.900" y="771.55" width="1.100" height="1.200" fill="#f4f4f4"/><rect x="537" y="774.00" width="1.100" height="1.200" fill="#f4f4f4"/><rect x="543.900" y="774.00" width="1.100" height="1.200" fill="#f4f4f4"/><rect x="537" y="776.45" width="1.100" height="1.200" fill="#f4f4f4"/><rect x="543.900" y="776.45" width="1.100" height="1.200" fill="#f4f4f4"/><rect x="532.700" y="772.60" width="1" height="1" fill="#f4f4f4"/><rect x="532.700" y="774.90" width="1" height="1" fill="#f4f4f4"/><rect x="532.700" y="777.20" width="1" height="1" fill="#f4f4f4"/><rect x="532.700" y="779.50" width="1" height="1" fill="#f4f4f4"/><rect x="539.500" y="772.800" width="3" height="1.100" fill="#f4f4f4"/><circle cx="560.800" cy="777" r="4.700" fill="#f8f8f8" stroke="#4b4b4b" stroke-width="1.200"/><circle cx="562.700" cy="775.100" r="4.700" fill="#f8f8f8" stroke="#4b4b4b" stroke-width="1.200"/><circle cx="564.800" cy="773.100" r="4.800" fill="#dcdcdc" stroke="#4b4b4b" stroke-width="1.300"/><rect x="580.700" y="769.700" width="13.700" height="11.300" fill="none" stroke="#4b4b4b" stroke-width="1.300"/><path d="M582.500,772.300c4.500,0 5,6 10,6.200" fill="none" stroke="#4b4b4b" stroke-width="1.100"/><path d="M585.300,767.200v2M588.400,767.200v2M591.400,767.200v2M578.900,771.500h1.300M578.900,775.300h1.300M578.900,779.200h1.300" stroke="#4b4b4b" stroke-width="1.100"/><path d="M7.8,802.3Q13.1,795.9 18.4,802.3Q13.1,808.6999999999999 7.8,802.3Z" fill="#4b4b4b"/><circle cx="13.1" cy="802.3" r="2.750" fill="#f8f8f8"/><circle cx="14.0" cy="801.4" r="0.800" fill="#4b4b4b"/><path d="M22.500,800h2l3.500,-3v10l-3.500,-3h-2z" fill="#4b4b4b"/><path d="M29.500,799.500a3.500,3.500 0 0 1 0,5M31.500,798a6,6 0 0 1 0,8" fill="none" stroke="#4b4b4b" stroke-width="1"/><circle cx="43" cy="802.500" r="3.300" fill="#4b4b4b"/><rect x="53.300" y="801.300" width="9.200" height="6" rx="0.800" fill="#4b4b4b"/><path d="M55.500,801.500v-1.500a2.400,2.400 0 0 1 4.800,0v1.500" fill="none" stroke="#4b4b4b" stroke-width="1.400"/><rect x="57.200" y="803" width="1.400" height="2.400" fill="#f8f8f8"/><path d="M83.500,797.500h5l6,6l-5,5l-6,-6z" fill="#4b4b4b"/><circle cx="86" cy="800" r="1" fill="#f8f8f8"/><rect x="446.500" y="797.500" width="10.500" height="10.500" fill="#4b4b4b"/><circle cx="451.700" cy="802.700" r="3.300" fill="#f8f8f8"/><rect x="461.500" y="797.500" width="10" height="10.500" fill="none" stroke="#4b4b4b" stroke-width="1.300"/><path d="M463,807.500l2,-6c2,-2.500 4,-3 6.500,-3.500v3c-1,2 -3,3 -5,3.500z" fill="#4b4b4b"/><path d="M7.2,820Q12.5,813.6 17.8,820Q12.5,826.4 7.2,820Z" fill="#4b4b4b"/><circle cx="12.5" cy="820" r="2.750" fill="#fafafa"/><circle cx="13.4" cy="819.1" r="0.800" fill="#4b4b4b"/><path d="M75.700,815.7l4,4.300l-4,4.300" fill="none" stroke="#4b4b4b" stroke-width="1.800"/><circle cx="365" cy="820" r="4.800" fill="none" stroke="#6a6a6a" stroke-width="1"/><path d="M367.300,821a2.500,2.500 0 1 1 -.8,-3" fill="none" stroke="#6a6a6a" stroke-width="1"/><path d="M370.300,816v2M370.300,819.5v2M369,824l1.800,-1.500" stroke="#6a6a6a" stroke-width="1.100"/><circle cx="487" cy="820" r="5.300" fill="none" stroke="#6a6a6a" stroke-width="1.100"/><path d="M489.8,821.5a3,3 0 1 1 -1.200,-3.800a1.800,1.800 0 1 0 -.3,2.800" fill="none" stroke="#6a6a6a" stroke-width="1.100"/><path d="M7.2,837Q12.5,830.6 17.8,837Q12.5,843.4 7.2,837Z" fill="#4b4b4b"/><circle cx="12.5" cy="837" r="2.750" fill="#fafafa"/><circle cx="13.4" cy="836.1" r="0.800" fill="#4b4b4b"/><path d="M75.700,832.7l4,4.300l-4,4.300" fill="none" stroke="#4b4b4b" stroke-width="1.800"/><circle cx="365" cy="837" r="4.800" fill="none" stroke="#6a6a6a" stroke-width="1"/><path d="M367.300,838a2.500,2.500 0 1 1 -.8,-3" fill="none" stroke="#6a6a6a" stroke-width="1"/><path d="M370.300,833v2M370.300,836.5v2M369,841l1.800,-1.500" stroke="#6a6a6a" stroke-width="1.100"/><circle cx="487" cy="837" r="5.300" fill="none" stroke="#6a6a6a" stroke-width="1.100"/><path d="M489.8,838.5a3,3 0 1 1 -1.200,-3.800a1.800,1.800 0 1 0 -.3,2.800" fill="none" stroke="#6a6a6a" stroke-width="1.100"/><rect x="8.700" y="1016.800" width="5.700" height="5.700" rx="0.500" fill="#f8f8f8" stroke="#4b4b4b" stroke-width="1.100"/><rect x="10.900" y="1019" width="5.700" height="5.700" rx="0.500" fill="#f8f8f8" stroke="#4b4b4b" stroke-width="1.100"/><rect x="13" y="1021.100" width="5.700" height="5.700" rx="0.500" fill="#f8f8f8" stroke="#4b4b4b" stroke-width="1.100"/><circle cx="15.800" cy="1024" r="0.900" fill="#8a8a8a"/><circle cx="31" cy="1020" r="3.800" fill="none" stroke="#4b4b4b" stroke-width="1"/><rect x="31.900" y="1020.900" width="5.300" height="5.300" fill="none" stroke="#3a3a3a" stroke-width="1.400"/><path d="M32.500,1021.500h2.200l-2.200,2.200z" fill="#3a3a3a"/><rect x="48.800" y="1016.500" width="5.400" height="10" fill="#dedede"/><path d="M49.400,1016.600c-1.400,0 -1.200,1.200 -1.200,2.400c0,1.300 -.8,2.300 -2,2.500c1.200,.2 2,1.200 2,2.500c0,1.200 -.2,2.400 1.200,2.400M53.600,1016.600c1.400,0 1.200,1.200 1.200,2.400c0,1.300 .8,2.300 2,2.500c-1.200,.2 -2,1.200 -2,2.500c0,1.200 .2,2.400 -1.200,2.400" fill="none" stroke="#4b4b4b" stroke-width="1.300"/><circle cx="68.300" cy="1021" r="3.800" fill="#6a6a6a"/><path d="M64,1025.500h11.500" stroke="#6a6a6a" stroke-width="1.300"/><path d="M71,1025c2,0 3,-1 3.200,-3l.6,-3.300M74.500,1021.500l1.800,-2.800" fill="none" stroke="#6a6a6a" stroke-width="1.100"/><circle cx="74.800" cy="1018.600" r="0.700" fill="#6a6a6a"/><circle cx="76.500" cy="1018.600" r="0.700" fill="#6a6a6a"/><path d="M1593,796h11v8l-5.500,5l-5.500,-5z" fill="#6e6e6e"/><rect x="1597" y="817" width="7" height="6.500" fill="#6e6e6e"/><path d="M1591,822l5.500,-6v6z" fill="#f8f8f8" stroke="#5a5a5a" stroke-width="0.900"/><circle cx="1596.500" cy="823.500" r="2.600" fill="#f8f8f8" stroke="#5a5a5a" stroke-width="0.900"/><path d="M1223,777h11v6l-5.500,7.500l-5.500,-7.500z" fill="#1a78f0"/><path d="M1227,783h3.500M1228.750,783v6" stroke="#fff" stroke-width="0.900"/><path d="M615,1023.700l3,-2.500l1.500,1.200l2,-2.800l3,4.100z" fill="#6a6a6a"/><circle cx="637.100" cy="1021.900" r="4.200" fill="#f8f8f8" stroke="#6a6a6a" stroke-width="1.600"/><path d="M646,1022h45" stroke="#d4d4d4" stroke-width="2"/><path d="M695,1025.400l4.500,-4.800l1.200,1l-3.700,3.800zM700.300,1025.400l5.700,-6.600l5.700,6.600z" fill="#6a6a6a"/></svg>
<!-- taskbar -->
<span id="t129" class="t" style="left:35.00px;top:1040.34px;font-size:12px;color:#000;font-weight:400;letter-spacing:-1.000px;z-index:5;">4</span>
<span id="t130" class="t" style="left:51.00px;top:1041.84px;font-size:12px;color:#fff;font-weight:400;letter-spacing:-1.200px;">5°C</span>
<span id="t131" class="t" style="left:51.00px;top:1057.84px;font-size:12px;color:#ead3da;font-weight:400;letter-spacing:0.109px;-webkit-text-stroke:0;">Mostly cloudy</span>
<div class="a" style="left:697px;top:1040px;width:220px;height:32px;background:#9a2345;border-radius:16px;box-sizing:border-box;border:1px solid #a63a59"></div>
<span id="t132" class="t" style="left:734.00px;top:1049.15px;font-size:14px;color:#f0dbe1;font-weight:400;letter-spacing:-0.514px;-webkit-text-stroke:0;">Search</span>
<div class="a" style="left:1229px;top:1036px;width:40px;height:40px;background:rgba(255,255,255,0.075);border-radius:5px;box-sizing:border-box;border:1px solid rgba(255,255,255,0.05)"></div>
<div class="a" style="left:1238px;top:1044.5px;width:22px;height:21px;background:#00005b;border-radius:4px"></div>
<span id="t133" class="t" style="left:1241.50px;top:1049.50px;font-size:13px;color:#9999ff;font-weight:700;letter-spacing:-0.888px;">Ae</span>
<div class="a" style="left:1241px;top:1072px;width:16px;height:3px;background:#ff4fa3;border-radius:1.5px"></div>
<div class="a" style="left:982px;top:1072px;width:6px;height:3px;background:#c78ea2;border-radius:1.5px"></div>
<div class="a" style="left:1114px;top:1072px;width:6px;height:3px;background:#c78ea2;border-radius:1.5px"></div>
<div class="a" style="left:1158px;top:1072px;width:6px;height:3px;background:#c78ea2;border-radius:1.5px"></div>
<div class="a" style="left:1202px;top:1072px;width:6px;height:3px;background:#c78ea2;border-radius:1.5px"></div>
<span id="t134" class="t" style="left:1851.00px;top:1042.84px;font-size:12px;color:#fff;font-weight:400;letter-spacing:-0.338px;-webkit-text-stroke:0;">12:52 AM</span>
<span id="t135" class="t" style="left:1840.00px;top:1058.84px;font-size:12px;color:#fff;font-weight:400;letter-spacing:-0.043px;-webkit-text-stroke:0;">10/30/2025</span>
<svg class="a" style="left:0;top:0" width="1920" height="1080" viewBox="0 0 1920 1080"><defs><linearGradient id="cl" x1="0" y1="0" x2="0" y2="1"><stop offset="0" stop-color="#f4f8ff"/><stop offset="1" stop-color="#9dbcf0"/></linearGradient><linearGradient id="wb" x1="0" y1="0" x2="1" y2="1"><stop offset="0" stop-color="#6fd6ff"/><stop offset="1" stop-color="#0f8ff2"/></linearGradient><linearGradient id="ig" x1="0" y1="1" x2="1" y2="0"><stop offset="0" stop-color="#fdc13a"/><stop offset="0.35" stop-color="#f0413c"/><stop offset="0.7" stop-color="#c8309a"/><stop offset="1" stop-color="#6a3fd0"/></linearGradient><linearGradient id="st" x1="0" y1="0" x2="0" y2="1"><stop offset="0" stop-color="#111d3c"/><stop offset="1" stop-color="#1a6aa8"/></linearGradient><linearGradient id="fo" x1="0" y1="0" x2="0" y2="1"><stop offset="0" stop-color="#ffd75a"/><stop offset="1" stop-color="#f5b51c"/></linearGradient></defs><path d="M27.800,1043L29.600,1048.500L32,1052.500L25,1057L19,1052.500L24.300,1050.300Z" fill="#f5a11f"/><circle cx="29" cy="1053" r="4.500" fill="#f8b02a"/><path d="M24,1066a4.500,4.500 0 0 1 -.5,-9a6.500,6.500 0 0 1 12,-2a5.500,5.500 0 0 1 4,11z" fill="url(#cl)"/><circle cx="38" cy="1046" r="8" fill="#f9949f"/><rect x="661" y="1045" width="11" height="11" rx="0.700" fill="url(#wb)"/><rect x="673" y="1045" width="11" height="11" rx="0.700" fill="url(#wb)"/><rect x="661" y="1057" width="11" height="11" rx="0.700" fill="url(#wb)"/><rect x="673" y="1057" width="11" height="11" rx="0.700" fill="url(#wb)"/><circle cx="715" cy="1054.500" r="5.500" fill="none" stroke="#f0dbe1" stroke-width="1.700"/><path d="M719,1059l4,4.500" stroke="#f0dbe1" stroke-width="1.900" stroke-linecap="round"/><rect x="929.500" y="1051.500" width="17" height="15" rx="1.500" fill="#5a5a5a"/><rect x="935.500" y="1045.500" width="17.500" height="15" rx="1.500" fill="#e8e8e8"/><rect x="935.500" y="1051.500" width="11" height="9" fill="#bdbdbd"/><path d="M973,1047.500a1.500,1.500 0 0 1 1.500,-1.500h6l2,2h13a1.500,1.500 0 0 1 1.500,1.500v15.500h-24z" fill="#e9a61b"/><rect x="973" y="1049.500" width="24" height="16.500" rx="1.500" fill="url(#fo)"/><path d="M978,1066v-4.500a1.500,1.500 0 0 1 1.500,-1.500h11a1.500,1.500 0 0 1 1.500,1.500v4.500z" fill="#1f7fd8"/><rect x="980" y="1062" width="10" height="1.500" fill="#135fb0"/><circle cx="1029" cy="1056" r="12" fill="#5865f2"/><path d="M1022,1051.500c2,-1.200 4,-1.600 4.500,-1.600l.6,1.200c1.200,-.2 2.600,-.2 3.800,0l.6,-1.200c.5,0 2.500,.4 4.500,1.600c1.600,2.600 2.400,5.600 2.200,9c-1.600,1.200 -3.200,1.900 -4.700,2.300l-1,-1.700l1.500,-.8c-3.200,1.400 -6.800,1.400 -10,0l1.500,.8l-1,1.700c-1.500,-.4 -3.100,-1.100 -4.700,-2.300c-.2,-3.400 .6,-6.400 2.200,-9z" fill="#fff"/><ellipse cx="1026" cy="1057.300" rx="1.700" ry="2" fill="#5865f2"/><ellipse cx="1032" cy="1057.300" rx="1.700" ry="2" fill="#5865f2"/><rect x="1061" y="1044" width="24" height="24" rx="6" fill="url(#ig)"/><rect x="1065" y="1048" width="16" height="16" rx="4.500" fill="none" stroke="#fff" stroke-width="1.700"/><circle cx="1073" cy="1056" r="3.800" fill="none" stroke="#fff" stroke-width="1.700"/><circle cx="1078" cy="1051" r="1" fill="#fff"/><circle cx="1117" cy="1056" r="12" fill="url(#st)"/><circle cx="1121.500" cy="1053" r="3.800" fill="none" stroke="#fff" stroke-width="1.500"/><circle cx="1121.500" cy="1053" r="1.700" fill="#fff"/><path d="M1105.500,1057.500l7,3a3,3 0 0 0 5.500,-1.500l4,-3l-3.500,-3l-3.500,4.500a3,3 0 0 0 -2,.5l-7.500,-3.500z" fill="#fff"/><circle cx="1115" cy="1060" r="1.600" fill="#1a4f88"/><circle cx="1161" cy="1056" r="11.500" fill="#1ed760"/><path d="M1154.500,1052c4.500,-1.500 10,-1 13.500,1" fill="none" stroke="#0a0a0a" stroke-width="2.100" stroke-linecap="round"/><path d="M1155,1056c4,-1.200 8.500,-.8 12,1" fill="none" stroke="#0a0a0a" stroke-width="1.800" stroke-linecap="round"/><path d="M1155.500,1059.800c3.500,-1 7,-.7 10,.8" fill="none" stroke="#0a0a0a" stroke-width="1.500" stroke-linecap="round"/><circle cx="1205" cy="1056" r="12" fill="#e33b2e"/><path d="M1205,1056l-10.400,-6a12,12 0 0 0 5,16.800z" fill="#2da94f" /><path d="M1194.600,1050a12,12 0 0 0 4.800,16.600l5.600,-10.600z" fill="#2da94f"/><path d="M1205,1056l-5.500,10.700a12,12 0 0 0 17.500,-10.700z" fill="#fdbd00"/><path d="M1205,1056h12a12,12 0 0 0 -1.600,-6z" fill="#fdbd00"/><circle cx="1205" cy="1056" r="5.500" fill="#fff"/><circle cx="1205" cy="1056" r="4.300" fill="#3b7ded"/><path d="M1728.500,1059l5,-5l5,5" fill="none" stroke="#fff" stroke-width="1.400"/><path d="M1758.500,1054a11,11 0 0 1 15.500,0M1761,1057a7.500,7.500 0 0 1 10.500,0M1763.500,1059.500a4,4 0 0 1 5.500,0" fill="none" stroke="#fff" stroke-width="1.400"/><circle cx="1766.200" cy="1060.800" r="1.100" fill="#fff"/><path d="M1782.500,1053.500h3l3.500,-3.500v12l-3.500,-3.500h-3z" fill="none" stroke="#fff" stroke-width="1.100"/><path d="M1791.500,1053.500a4,4 0 0 1 0,5" fill="none" stroke="#fff" stroke-width="1"/><path d="M1794,1051a7,7 0 0 1 0,10M1796,1049a9.500,9.500 0 0 1 0,14" fill="none" stroke="#b26a80" stroke-width="1"/><rect x="1806.500" y="1052" width="14" height="8.500" rx="1.800" fill="none" stroke="#fff" stroke-width="1.200"/><rect x="1809" y="1053.500" width="10" height="5.500" rx="0.800" fill="#fff"/><path d="M1821,1054.500v3.500" stroke="#fff" stroke-width="1.800"/><path d="M1809.500,1048l-3,5.500h2.500l-1,4l3.500,-5.500h-2.500z" fill="#fff" stroke="#85002b" stroke-width="0.600"/></svg>
</body></html>
